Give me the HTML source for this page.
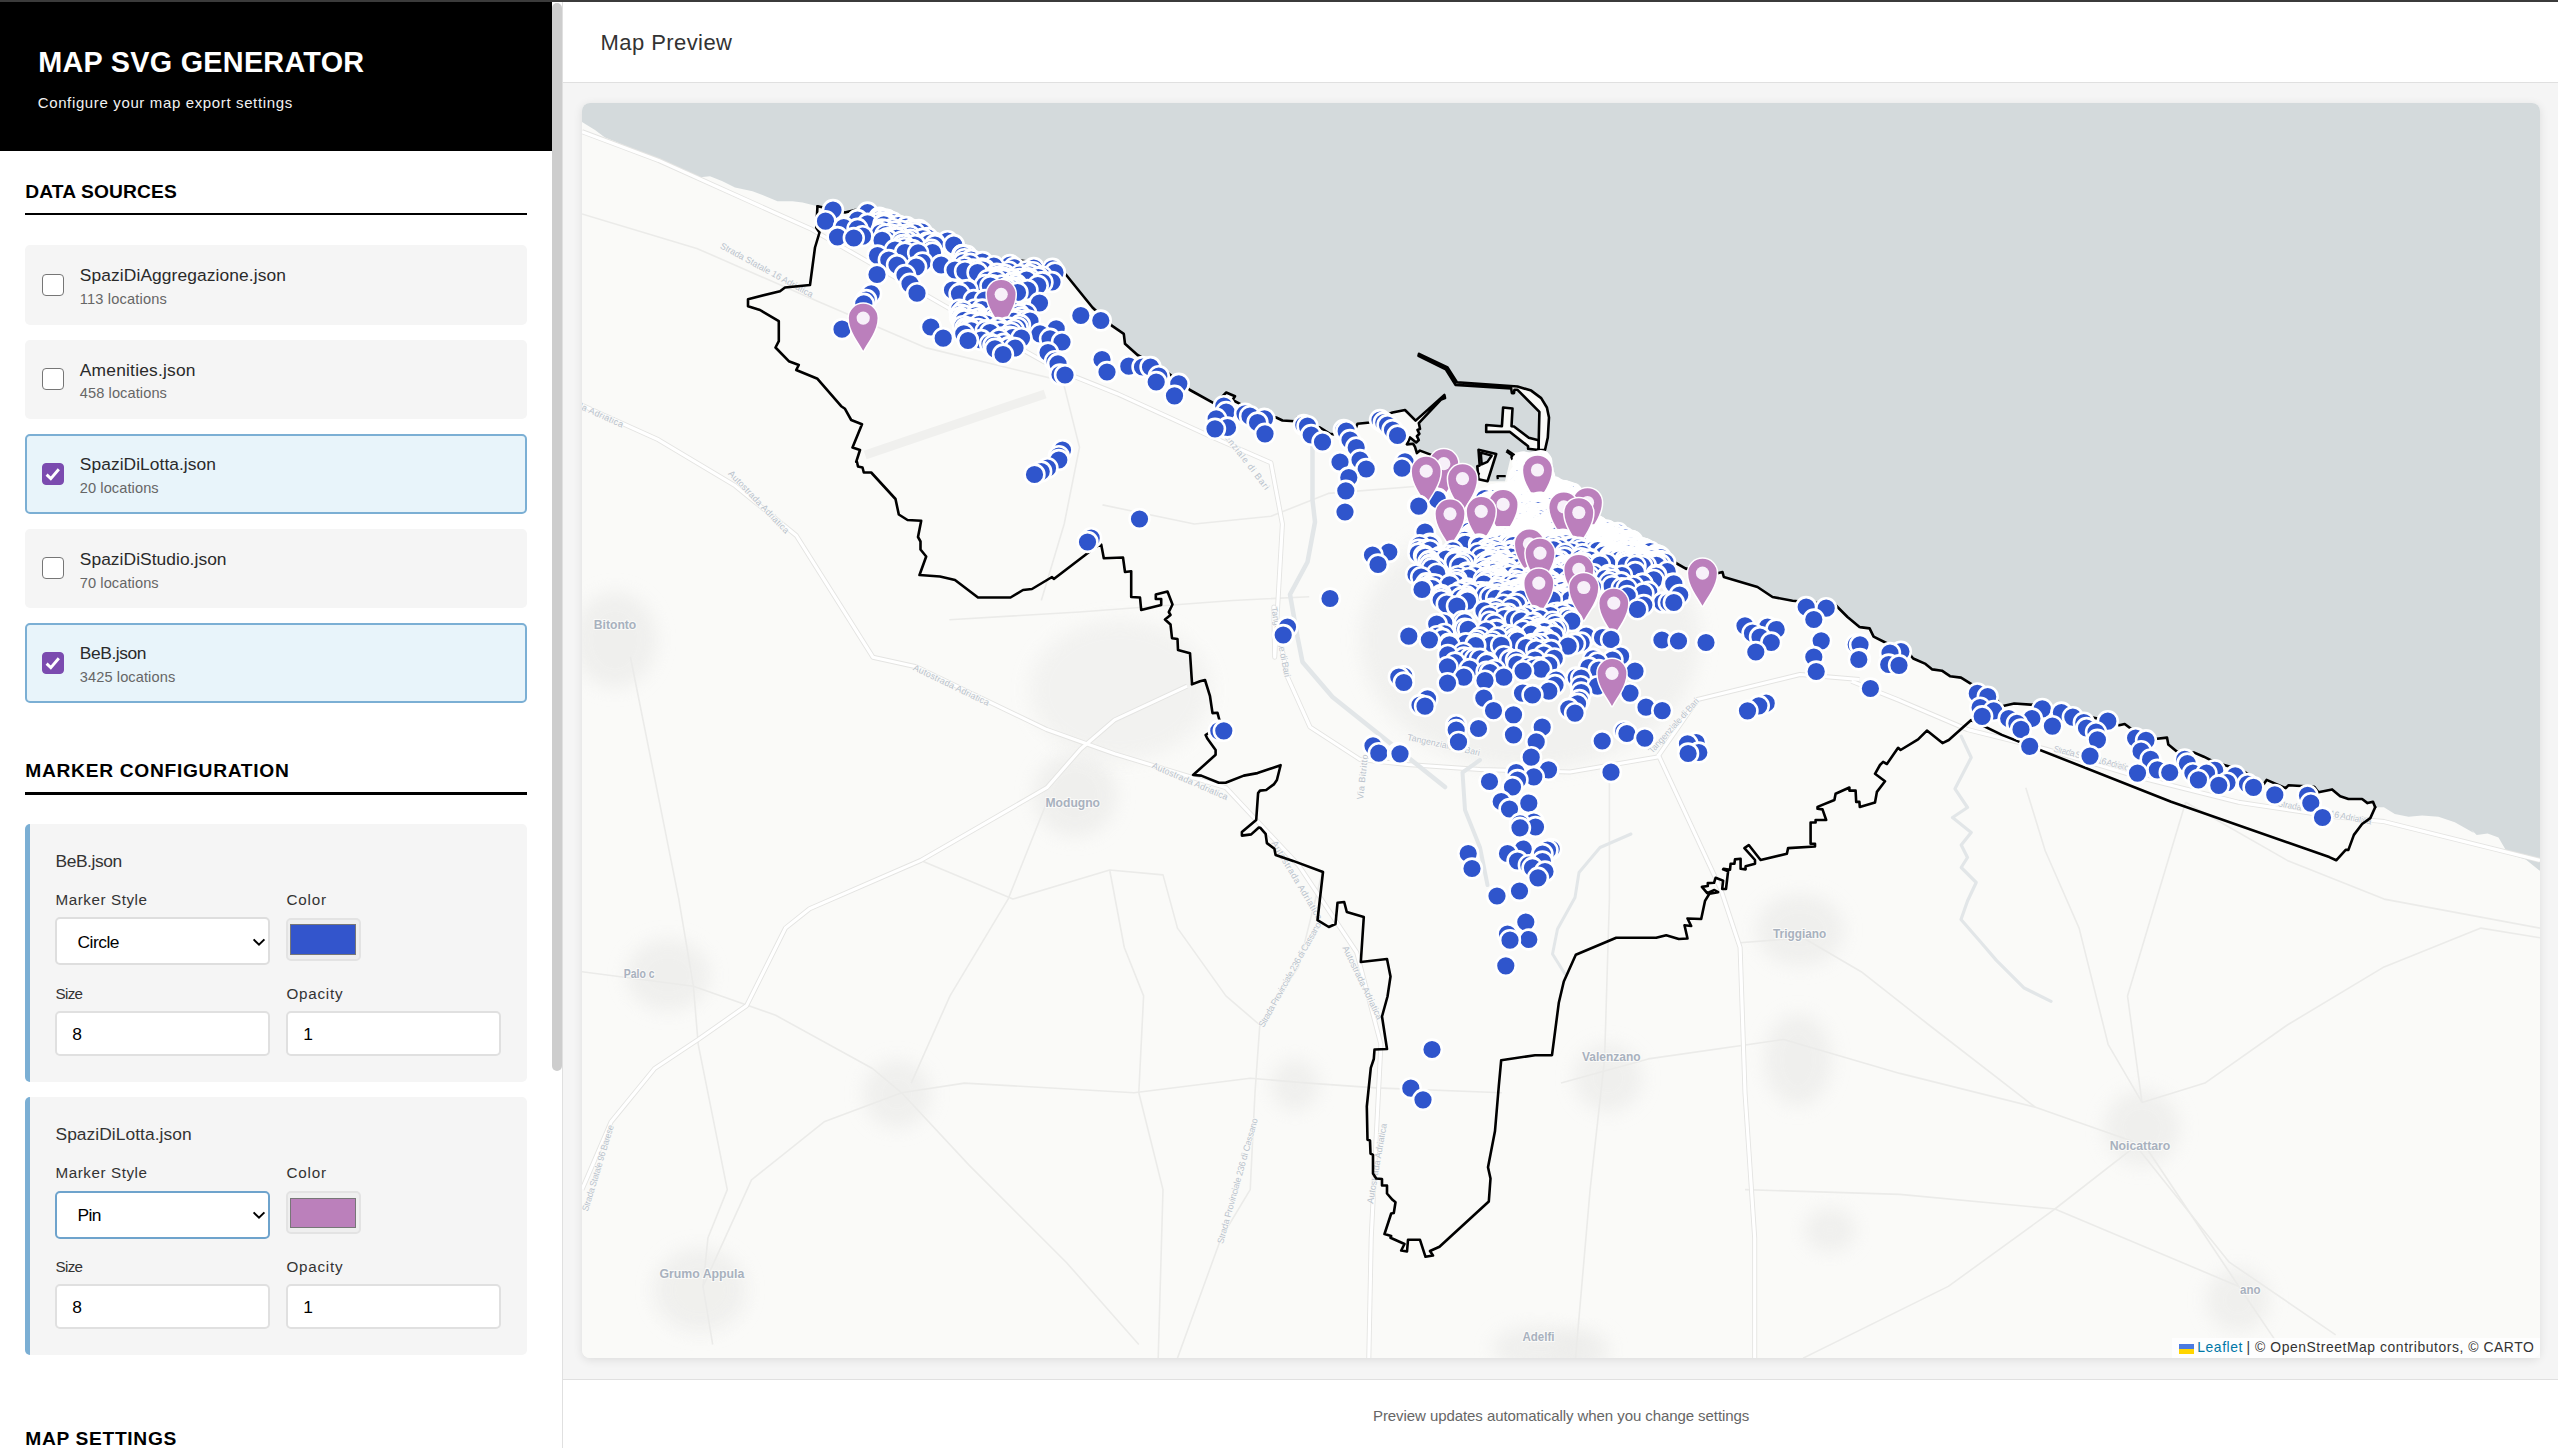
<!DOCTYPE html>
<html lang="en"><head><meta charset="utf-8"><title>Map SVG Generator</title>
<style>
*{box-sizing:border-box;margin:0;padding:0}
html,body{width:2558px;height:1448px;overflow:hidden;background:#fff;font-family:"Liberation Sans",sans-serif}
body{position:relative}
.a{position:absolute}
.t{position:absolute;white-space:nowrap;display:block}
.card{position:absolute;left:25px;width:502px;height:79.5px;background:#f5f5f5;border-radius:5px}
.card.sel{background:#e8f4fa;border:2px solid #7bafd4}
.cb{position:absolute;left:42px;width:22px;height:22px;border:1.5px solid #767676;border-radius:4px;background:#fff}
.cb.on{background:#7b4baf;border-color:#7b4baf}
.cfg{position:absolute;left:25px;width:502px;height:258px;background:#f5f5f5;border-radius:5px;border-left:5px solid #7bafd4}
.inp{position:absolute;background:#fff;border:2px solid #e0e0e0;border-radius:5px}
.col{position:absolute;background:#efefef;border:2px solid #e3e3e3;border-radius:5px}
.sw{position:absolute;border:1px solid #777}

</style></head><body>
<div class="a" style="left:0;top:0;width:2558px;height:2px;background:#3b3b3b"></div>
<div class="a" style="left:0;top:2px;width:552px;height:149px;background:#000"></div>
<span class="t" style="left:38.30px;top:47.82px;font-size:28.8px;line-height:28.8px;color:#fff;letter-spacing:0.263px;font-weight:700;">MAP SVG GENERATOR</span>
<span class="t" style="left:37.70px;top:95.20px;font-size:15px;line-height:15px;color:#f2f2f2;letter-spacing:0.637px;">Configure your map export settings</span>
<div class="a" style="left:552px;top:2px;width:10px;height:1446px;background:#fff"></div>
<div class="a" style="left:562px;top:2px;width:1px;height:1446px;background:#e0e0e0"></div>
<div class="a" style="left:552.3px;top:2.5px;width:9.5px;height:1068.5px;background:#cdcdcd;border-radius:5px"></div>
<span class="t" style="left:25.30px;top:181.55px;font-size:19.2px;line-height:19.2px;color:#000;letter-spacing:0.141px;font-weight:700;">DATA SOURCES</span>
<div class="a" style="left:25px;top:213.0px;width:502px;height:2.2px;background:#000"></div>
<div class="card" style="top:245.0px"></div>
<div class="cb" style="top:273.6px"></div>
<span class="t" style="left:79.80px;top:266.97px;font-size:17.4px;line-height:17.4px;color:#2a2a2a;letter-spacing:0.096px;">SpaziDiAggregazione.json</span>
<span class="t" style="left:79.80px;top:291.84px;font-size:14.6px;line-height:14.6px;color:#666;letter-spacing:0.183px;">113 locations</span>
<div class="card" style="top:339.6px"></div>
<div class="cb" style="top:368.2px"></div>
<span class="t" style="left:79.80px;top:361.57px;font-size:17.4px;line-height:17.4px;color:#2a2a2a;letter-spacing:0.201px;">Amenities.json</span>
<span class="t" style="left:79.80px;top:386.44px;font-size:14.6px;line-height:14.6px;color:#666;letter-spacing:0.093px;">458 locations</span>
<div class="card sel" style="top:434.2px"></div>
<div class="cb on" style="top:463.2px"><svg width="22" height="22" viewBox="0 0 22 22" style="position:absolute;left:-1.5px;top:-1.5px"><path d="M4.6 11.6 L8.8 15.6 L16.8 6.2" fill="none" stroke="#fff" stroke-width="2.9" stroke-linecap="butt" stroke-linejoin="miter"/></svg></div>
<span class="t" style="left:79.80px;top:456.17px;font-size:17.4px;line-height:17.4px;color:#2a2a2a;letter-spacing:0.049px;">SpaziDiLotta.json</span>
<span class="t" style="left:79.80px;top:481.04px;font-size:14.6px;line-height:14.6px;color:#666;letter-spacing:0.086px;">20 locations</span>
<div class="card" style="top:528.8px"></div>
<div class="cb" style="top:557.4px"></div>
<span class="t" style="left:79.80px;top:550.77px;font-size:17.4px;line-height:17.4px;color:#2a2a2a;letter-spacing:0.045px;">SpaziDiStudio.json</span>
<span class="t" style="left:79.80px;top:575.64px;font-size:14.6px;line-height:14.6px;color:#666;letter-spacing:0.086px;">70 locations</span>
<div class="card sel" style="top:623.4px"></div>
<div class="cb on" style="top:652.4px"><svg width="22" height="22" viewBox="0 0 22 22" style="position:absolute;left:-1.5px;top:-1.5px"><path d="M4.6 11.6 L8.8 15.6 L16.8 6.2" fill="none" stroke="#fff" stroke-width="2.9" stroke-linecap="butt" stroke-linejoin="miter"/></svg></div>
<span class="t" style="left:79.80px;top:645.37px;font-size:17.4px;line-height:17.4px;color:#2a2a2a;letter-spacing:-0.420px;">BeB.json</span>
<span class="t" style="left:79.80px;top:670.24px;font-size:14.6px;line-height:14.6px;color:#666;letter-spacing:0.098px;">3425 locations</span>
<span class="t" style="left:25.30px;top:760.95px;font-size:19.2px;line-height:19.2px;color:#000;letter-spacing:0.704px;font-weight:700;">MARKER CONFIGURATION</span>
<div class="a" style="left:25px;top:792.4px;width:502px;height:2.2px;background:#000"></div>
<div class="cfg" style="top:823.8px"></div>
<span class="t" style="left:55.50px;top:852.97px;font-size:17.4px;line-height:17.4px;color:#333;letter-spacing:-0.420px;">BeB.json</span>
<span class="t" style="left:55.50px;top:891.93px;font-size:15.2px;line-height:15.2px;color:#333;letter-spacing:0.569px;">Marker Style</span>
<span class="t" style="left:286.50px;top:891.93px;font-size:15.2px;line-height:15.2px;color:#333;letter-spacing:0.802px;">Color</span>
<div class="inp" style="left:55.4px;top:917.3px;width:214.8px;height:48.1px;border-color:#dedede"></div>
<span class="t" style="left:77.50px;top:933.87px;font-size:17.4px;line-height:17.4px;color:#000;letter-spacing:-0.481px;">Circle</span>
<svg class="a" style="left:251px;top:935.8px" width="16" height="12" viewBox="0 0 16 12"><path d="M2.6 3.4 L8 8.7 L13.4 3.4" fill="none" stroke="#000" stroke-width="2"/></svg>
<div class="col" style="left:286.4px;top:917.6px;width:74.2px;height:43.6px"></div>
<div class="sw" style="left:290.2px;top:924.4px;width:65.8px;height:30.4px;background:#3355cc"></div>
<span class="t" style="left:55.50px;top:986.23px;font-size:15.2px;line-height:15.2px;color:#333;letter-spacing:-0.681px;">Size</span>
<span class="t" style="left:286.50px;top:986.23px;font-size:15.2px;line-height:15.2px;color:#333;letter-spacing:0.752px;">Opacity</span>
<div class="inp" style="left:55.4px;top:1010.8px;width:214.8px;height:45.3px"></div>
<div class="inp" style="left:286.4px;top:1010.8px;width:214.8px;height:45.3px"></div>
<span class="t" style="left:72.20px;top:1026.27px;font-size:17.4px;line-height:17.4px;color:#000;">8</span>
<span class="t" style="left:303.20px;top:1026.27px;font-size:17.4px;line-height:17.4px;color:#000;">1</span>
<div class="cfg" style="top:1097.0px"></div>
<span class="t" style="left:55.50px;top:1126.17px;font-size:17.4px;line-height:17.4px;color:#333;letter-spacing:0.049px;">SpaziDiLotta.json</span>
<span class="t" style="left:55.50px;top:1165.13px;font-size:15.2px;line-height:15.2px;color:#333;letter-spacing:0.569px;">Marker Style</span>
<span class="t" style="left:286.50px;top:1165.13px;font-size:15.2px;line-height:15.2px;color:#333;letter-spacing:0.802px;">Color</span>
<div class="inp" style="left:55.4px;top:1190.5px;width:214.8px;height:48.1px;border-color:#6ea3cc"></div>
<span class="t" style="left:77.50px;top:1207.07px;font-size:17.4px;line-height:17.4px;color:#000;letter-spacing:-0.556px;">Pin</span>
<svg class="a" style="left:251px;top:1209.0px" width="16" height="12" viewBox="0 0 16 12"><path d="M2.6 3.4 L8 8.7 L13.4 3.4" fill="none" stroke="#000" stroke-width="2"/></svg>
<div class="col" style="left:286.4px;top:1190.8px;width:74.2px;height:43.6px"></div>
<div class="sw" style="left:290.2px;top:1197.6px;width:65.8px;height:30.4px;background:#bb80bb"></div>
<span class="t" style="left:55.50px;top:1259.43px;font-size:15.2px;line-height:15.2px;color:#333;letter-spacing:-0.681px;">Size</span>
<span class="t" style="left:286.50px;top:1259.43px;font-size:15.2px;line-height:15.2px;color:#333;letter-spacing:0.752px;">Opacity</span>
<div class="inp" style="left:55.4px;top:1284.0px;width:214.8px;height:45.3px"></div>
<div class="inp" style="left:286.4px;top:1284.0px;width:214.8px;height:45.3px"></div>
<span class="t" style="left:72.20px;top:1299.47px;font-size:17.4px;line-height:17.4px;color:#000;">8</span>
<span class="t" style="left:303.20px;top:1299.47px;font-size:17.4px;line-height:17.4px;color:#000;">1</span>
<span class="t" style="left:25.30px;top:1428.55px;font-size:19.2px;line-height:19.2px;color:#000;letter-spacing:0.676px;font-weight:700;">MAP SETTINGS</span>
<div class="a" style="left:563px;top:2px;width:1995px;height:80px;background:#fff"></div>
<div class="a" style="left:563px;top:82px;width:1995px;height:1px;background:#e0e0e0"></div>
<span class="t" style="left:600.50px;top:31.88px;font-size:22px;line-height:22px;color:#333;letter-spacing:0.434px;">Map Preview</span>
<div class="a" style="left:563px;top:83px;width:1995px;height:1296px;background:#f5f5f5"></div>
<div class="a" style="left:582px;top:103px;width:1958px;height:1255px;background:#fafaf8;border-radius:8px;box-shadow:0 2px 10px rgba(0,0,0,0.1);overflow:hidden" id="map"><svg width="1958" height="1255" viewBox="582 103 1958 1255" style="position:absolute;left:0;top:0">
<rect x="582" y="103" width="1958" height="1255" fill="#fafaf8"/>
<defs><filter id="bl" x="-30%" y="-30%" width="160%" height="160%"><feGaussianBlur stdDeviation="9"/></filter></defs><ellipse cx="615" cy="640" rx="42" ry="48" fill="#ececea" opacity="0.75" filter="url(#bl)"/><ellipse cx="1075" cy="795" rx="42" ry="42" fill="#ececea" opacity="0.75" filter="url(#bl)"/><ellipse cx="668" cy="975" rx="42" ry="36" fill="#ececea" opacity="0.75" filter="url(#bl)"/><ellipse cx="700" cy="1290" rx="46" ry="42" fill="#ececea" opacity="0.75" filter="url(#bl)"/><ellipse cx="897" cy="1094" rx="34" ry="34" fill="#ececea" opacity="0.75" filter="url(#bl)"/><ellipse cx="1540" cy="1348" rx="48" ry="22" fill="#ececea" opacity="0.75" filter="url(#bl)"/><ellipse cx="1608" cy="1078" rx="34" ry="34" fill="#ececea" opacity="0.75" filter="url(#bl)"/><ellipse cx="1800" cy="930" rx="44" ry="36" fill="#ececea" opacity="0.75" filter="url(#bl)"/><ellipse cx="1798" cy="1060" rx="34" ry="46" fill="#ececea" opacity="0.75" filter="url(#bl)"/><ellipse cx="2142" cy="1128" rx="38" ry="38" fill="#ececea" opacity="0.75" filter="url(#bl)"/><ellipse cx="2238" cy="1300" rx="32" ry="32" fill="#ececea" opacity="0.75" filter="url(#bl)"/><ellipse cx="1830" cy="1230" rx="26" ry="22" fill="#ececea" opacity="0.75" filter="url(#bl)"/><ellipse cx="1295" cy="1085" rx="24" ry="26" fill="#ececea" opacity="0.75" filter="url(#bl)"/><ellipse cx="1580" cy="1350" rx="30" ry="20" fill="#ececea" opacity="0.75" filter="url(#bl)"/><ellipse cx="1530" cy="640" rx="170" ry="130" fill="#efefed" opacity="0.8" filter="url(#bl)"/><ellipse cx="1120" cy="690" rx="90" ry="70" fill="#efefed" opacity="0.7" filter="url(#bl)"/>
<polygon points="582.0,103.0 2540.0,103.0 2540.0,870.4 2539.4,870.4 2525.8,859.5 2508.1,854.0 2498.5,837.6 2487.6,833.6 2476.7,834.9 2471.2,829.5 2473.9,833.1 2454.8,822.2 2438.5,816.7 2422.1,815.4 2408.5,816.7 2394.8,814.0 2383.9,807.2 2375.2,807.2 2373.0,801.7 2367.5,803.1 2362.1,799.0 2348.4,799.0 2340.2,796.3 2332.1,789.4 2318.4,792.2 2314.3,786.7 2288.4,785.3 2285.7,788.1 2266.6,779.9 2263.8,784.0 2242.0,770.3 2214.7,762.2 2203.8,756.7 2194.3,752.6 2176.5,751.2 2168.3,744.4 2167.0,737.6 2154.7,739.0 2135.6,732.1 2124.7,724.0 2119.2,725.3 2097.4,718.5 2078.3,714.4 2051.0,707.6 2034.6,704.9 2014.2,703.5 2001.9,706.2 1996.4,699.4 1971.9,684.4 1961.0,677.6 1950.0,676.2 1941.9,670.7 1932.3,669.4 1925.5,663.9 1913.2,658.5 1906.4,650.3 1887.3,643.5 1873.6,636.6 1869.6,628.4 1860.0,627.1 1859.5,627.0 1847.5,617.0 1835.0,604.5 1792.5,600.8 1772.5,597.0 1757.5,587.0 1723.8,577.0 1722.5,572.0 1717.5,573.2 1685.0,568.2 1686.2,568.8 1675.0,562.5 1662.5,560.0 1662.5,560.0 1650.0,552.5 1631.2,546.2 1612.5,535.0 1600.0,526.2 1575.0,490.0 1555.0,487.5 1547.5,451.9 1512.5,452.5 1511.2,455.0 1505.0,481.2 1488.8,481.2 1478.8,473.8 1467.5,471.2 1450.0,462.5 1430.0,454.4 1420.0,450.6 1416.9,453.1 1415.0,446.9 1413.1,443.8 1406.9,444.4 1410.0,437.5 1416.2,442.5 1418.8,440.0 1416.9,436.2 1419.4,433.8 1417.5,430.0 1420.0,428.8 1418.8,423.1 1441.2,399.4 1445.0,398.1 1444.4,395.0 1415.6,420.6 1405.0,410.0 1392.5,412.5 1372.5,420.0 1370.0,422.5 1357.5,423.8 1355.0,430.0 1337.5,435.0 1330.0,433.8 1320.0,427.5 1298.8,422.5 1297.5,417.5 1295.0,421.2 1282.5,420.5 1276.2,417.5 1257.5,413.8 1241.2,410.0 1240.0,403.8 1232.5,400.0 1235.0,396.2 1226.2,392.5 1220.0,398.8 1215.0,403.8 1190.0,390.0 1162.5,368.8 1137.5,355.0 1125.0,343.8 1123.8,333.8 1112.5,326.2 1092.5,307.5 1066.2,275.0 1055.0,265.0 1033.8,262.5 1010.0,258.8 985.0,260.0 962.5,247.5 947.5,236.2 930.0,232.5 918.8,228.0 905.0,224.5 890.0,217.5 875.0,213.0 855.0,210.0 845.0,212.5 826.2,208.0 817.5,206.2 817.5,206.2 802.5,202.5 792.5,201.2 777.5,201.2 762.5,195.0 752.5,191.2 735.0,187.5 722.5,181.2 710.0,176.2 697.5,177.5 690.0,172.5 678.8,167.5 665.0,162.5 655.0,160.0 638.8,153.8 635.0,150.0 617.5,142.5 605.0,137.5 595.0,130.0 582.0,122.0 582.0,122.0" fill="#d4dadc"/>
<polyline points="865.2,455.1 1045.1,393.9" fill="none" stroke="#f0f0ee" stroke-width="9"/><polyline points="630.4,657.0 659.5,802.3 678.8,899.1 693.4,986.2 698.2,1044.3 717.6,1141.2 727.3,1189.6 707.9,1238.0 703.0,1286.4" fill="none" stroke="#ebebe9" stroke-width="1.6" stroke-linejoin="round"/><polyline points="582.0,971.7 693.4,986.2 775.7,1015.3 872.5,1068.5 901.6,1092.8" fill="none" stroke="#ebebe9" stroke-width="1.6" stroke-linejoin="round"/><polyline points="901.6,1092.8 964.5,1083.1 1134.0,1092.8 1250.2,1078.2 1308.3,1083.1 1376.0,1087.9 1501.9,1092.8" fill="none" stroke="#ebebe9" stroke-width="1.6" stroke-linejoin="round"/><polyline points="1322.8,870.0 1298.6,966.9 1259.8,1025.0 1255.0,1092.8 1250.2,1189.6 1221.1,1238.0 1177.5,1358.1" fill="none" stroke="#ebebe9" stroke-width="1.6" stroke-linejoin="round"/><polyline points="1046.8,802.3 1008.1,899.1 950.0,995.9 911.2,1083.1" fill="none" stroke="#ebebe9" stroke-width="1.6" stroke-linejoin="round"/><polyline points="920.9,860.4 1012.9,899.1 1109.7,870.0 1163.0,874.9 1177.5,928.1 1225.9,995.9 1259.8,1025.0" fill="none" stroke="#ebebe9" stroke-width="1.6" stroke-linejoin="round"/><polyline points="901.6,1092.8 969.3,1165.4 1066.2,1262.2 1138.8,1344.5" fill="none" stroke="#ebebe9" stroke-width="1.6" stroke-linejoin="round"/><polyline points="901.6,1092.8 824.1,1121.8 751.5,1179.9 703.0,1286.4 712.7,1344.5" fill="none" stroke="#ebebe9" stroke-width="1.6" stroke-linejoin="round"/><polyline points="1109.7,870.0 1124.3,947.5 1143.6,995.9 1138.8,1092.8 1163.0,1189.6 1158.2,1358.1" fill="none" stroke="#ebebe9" stroke-width="1.6" stroke-linejoin="round"/><polyline points="1609.4,778.0 1609.4,899.1 1604.6,1058.9 1590.1,1189.6 1575.5,1358.1" fill="none" stroke="#ebebe9" stroke-width="1.6" stroke-linejoin="round"/><polyline points="1740.1,942.7 1803.1,937.8 1861.2,971.7 1929.0,1025.0 2035.5,1107.3 2132.3,1141.2 2229.2,1262.2 2335.7,1334.8" fill="none" stroke="#ebebe9" stroke-width="1.6" stroke-linejoin="round"/><polyline points="2142.0,1102.4 2204.9,1083.1 2287.3,1025.0 2384.1,966.9 2480.9,928.1 2540.0,937.8" fill="none" stroke="#ebebe9" stroke-width="1.6" stroke-linejoin="round"/><polyline points="2142.0,1102.4 2108.1,1044.3 2079.1,928.1 2045.2,850.7 2025.8,787.7" fill="none" stroke="#ebebe9" stroke-width="1.6" stroke-linejoin="round"/><polyline points="2142.0,1102.4 2127.5,995.9 2156.5,899.1 2185.6,802.3" fill="none" stroke="#ebebe9" stroke-width="1.6" stroke-linejoin="round"/><polyline points="1561.0,1083.1 1648.2,1058.9 1783.7,1039.5 1899.9,1073.4 2035.5,1107.3" fill="none" stroke="#ebebe9" stroke-width="1.6" stroke-linejoin="round"/><polyline points="2142.0,1141.2 2054.9,1209.0 1948.3,1286.4 1803.1,1358.1" fill="none" stroke="#ebebe9" stroke-width="1.6" stroke-linejoin="round"/><polyline points="2142.0,1141.2 2238.8,1286.4 2287.3,1358.1" fill="none" stroke="#ebebe9" stroke-width="1.6" stroke-linejoin="round"/><polyline points="1745.0,1189.6 1899.9,1194.4 2054.9,1209.0 2238.8,1286.4" fill="none" stroke="#ebebe9" stroke-width="1.6" stroke-linejoin="round"/><polyline points="2185.6,802.3 2287.3,860.4 2384.1,899.1 2540.0,928.1" fill="none" stroke="#ebebe9" stroke-width="1.6" stroke-linejoin="round"/><polyline points="582.0,214.0 696.8,248.4 819.3,302.0 926.4,347.9 1068.0,382.4" fill="none" stroke="#ebebe9" stroke-width="1.6" stroke-linejoin="round"/><polyline points="1060.4,370.9 1079.5,447.4 1064.2,524.0 1041.3,600.5" fill="none" stroke="#ebebe9" stroke-width="1.6" stroke-linejoin="round"/><polyline points="1102.5,504.9 1194.3,524.0 1270.9,516.3 1328.3,493.4 1424.0,485.7" fill="none" stroke="#ebebe9" stroke-width="1.6" stroke-linejoin="round"/><polyline points="949.4,619.7 1079.5,612.0 1232.6,600.5 1309.2,596.7" fill="none" stroke="#ebebe9" stroke-width="1.6" stroke-linejoin="round"/><polyline points="916.1,666.7 1046.8,729.6 1114.6,753.8 1225.9,787.7 1298.6,865.2 1356.7,952.3 1380.9,1044.3 1376.0,1141.2 1371.2,1238.0 1368.8,1358.1" fill="none" stroke="#e4e4e2" stroke-width="5" stroke-linejoin="round"/><polyline points="582.0,405.3 658.5,439.8 735.1,485.7 796.3,535.5 872.9,657.2 916.1,666.7" fill="none" stroke="#e4e4e2" stroke-width="5" stroke-linejoin="round"/><polyline points="582.0,1189.6 611.1,1121.8 654.6,1068.5 698.2,1039.5 746.6,1005.6 785.4,928.1 809.6,908.8 920.9,860.4 1046.8,787.7 1080.7,749.0 1114.6,719.9 1187.2,686.1" fill="none" stroke="#e4e4e2" stroke-width="5" stroke-linejoin="round"/><polyline points="582.0,131.7 658.5,160.4 811.6,229.3 964.7,317.3 1060.4,370.9 1117.8,393.9 1209.7,436.0 1270.9,462.8 1282.4,524.0 1274.7,657.2 1273.8,607.0 1287.5,677.0 1310.0,727.0 1360.0,759.5 1407.5,764.5 1480.0,769.5 1570.0,772.0 1657.5,757.0 1697.5,699.5 1800.0,674.5 1859.5,679.5" fill="none" stroke="#e4e4e2" stroke-width="5" stroke-linejoin="round"/><polyline points="1851.5,681.2 1899.9,700.6 1967.7,729.6 2045.2,749.0 2142.0,778.0 2238.8,802.3 2335.7,816.8 2384.1,821.6 2540.0,860.4" fill="none" stroke="#e4e4e2" stroke-width="5" stroke-linejoin="round"/><polyline points="1657.8,753.8 1720.8,889.4 1740.1,947.5 1745.0,1092.8 1754.7,1238.0 1754.7,1358.1" fill="none" stroke="#e4e4e2" stroke-width="5" stroke-linejoin="round"/><polyline points="916.1,666.7 1046.8,729.6 1114.6,753.8 1225.9,787.7 1298.6,865.2 1356.7,952.3 1380.9,1044.3 1376.0,1141.2 1371.2,1238.0 1368.8,1358.1" fill="none" stroke="#fff" stroke-width="3.2" stroke-linejoin="round"/><polyline points="582.0,405.3 658.5,439.8 735.1,485.7 796.3,535.5 872.9,657.2 916.1,666.7" fill="none" stroke="#fff" stroke-width="3.2" stroke-linejoin="round"/><polyline points="582.0,1189.6 611.1,1121.8 654.6,1068.5 698.2,1039.5 746.6,1005.6 785.4,928.1 809.6,908.8 920.9,860.4 1046.8,787.7 1080.7,749.0 1114.6,719.9 1187.2,686.1" fill="none" stroke="#fff" stroke-width="3.2" stroke-linejoin="round"/><polyline points="582.0,131.7 658.5,160.4 811.6,229.3 964.7,317.3 1060.4,370.9 1117.8,393.9 1209.7,436.0 1270.9,462.8 1282.4,524.0 1274.7,657.2 1273.8,607.0 1287.5,677.0 1310.0,727.0 1360.0,759.5 1407.5,764.5 1480.0,769.5 1570.0,772.0 1657.5,757.0 1697.5,699.5 1800.0,674.5 1859.5,679.5" fill="none" stroke="#fff" stroke-width="3.2" stroke-linejoin="round"/><polyline points="1851.5,681.2 1899.9,700.6 1967.7,729.6 2045.2,749.0 2142.0,778.0 2238.8,802.3 2335.7,816.8 2384.1,821.6 2540.0,860.4" fill="none" stroke="#fff" stroke-width="3.2" stroke-linejoin="round"/><polyline points="1657.8,753.8 1720.8,889.4 1740.1,947.5 1745.0,1092.8 1754.7,1238.0 1754.7,1358.1" fill="none" stroke="#fff" stroke-width="3.2" stroke-linejoin="round"/>
<polyline points="1312.5,440.0 1312.5,500.0 1315.0,522.0 1307.5,562.0 1290.0,594.5 1297.5,637.0 1302.5,662.0 1332.5,697.0 1382.5,737.0 1445.0,787.0" fill="none" stroke="#e2e6e8" stroke-width="4.5" stroke-linejoin="round" stroke-linecap="round"/><polyline points="1480.0,760.0 1462.5,772.5 1465.0,810.0 1480.0,847.5 1487.5,885.0" fill="none" stroke="#e2e6e8" stroke-width="4" stroke-linejoin="round" stroke-linecap="round"/><polyline points="1631.0,834.0 1600.0,847.5 1579.0,872.5 1575.0,897.5 1557.5,929.0 1552.5,954.0 1565.0,974.0" fill="none" stroke="#e2e6e8" stroke-width="3" stroke-linejoin="round" stroke-linecap="round"/><polyline points="1961.2,736.2 1971.2,757.5 1955.0,788.8 1967.5,807.5 1952.5,817.5 1971.2,832.5 1961.2,845.0 1967.5,857.5 1961.2,867.5 1976.2,882.5 1967.5,901.0 1961.0,919.5 1980.0,941.3 1996.4,960.4 2023.7,987.7 2051.0,1001.4" fill="none" stroke="#e2e6e8" stroke-width="3.2" stroke-linejoin="round" stroke-linecap="round"/>
<text transform="translate(721.0,245.0) rotate(28.7)" x="0" y="3" font-family="Liberation Sans, sans-serif" font-size="9" fill="#b9c2cc" stroke="#fafaf8" stroke-width="1.5" paint-order="stroke" textLength="104.3" lengthAdjust="spacing">Strada Statale 16 Adriatica</text><text transform="translate(730.0,472.0) rotate(46.2)" x="0" y="3" font-family="Liberation Sans, sans-serif" font-size="9" fill="#b9c2cc" stroke="#fafaf8" stroke-width="1.5" paint-order="stroke" textLength="83.1" lengthAdjust="spacing">Autostrada Adriatica</text><text transform="translate(913.8,667.0) rotate(25.8)" x="0" y="3" font-family="Liberation Sans, sans-serif" font-size="9" fill="#b9c2cc" stroke="#fafaf8" stroke-width="1.5" paint-order="stroke" textLength="83.3" lengthAdjust="spacing">Autostrada Adriatica</text><text transform="translate(1152.5,765.0) rotate(23.4)" x="0" y="3" font-family="Liberation Sans, sans-serif" font-size="9" fill="#b9c2cc" stroke="#fafaf8" stroke-width="1.5" paint-order="stroke" textLength="81.7" lengthAdjust="spacing">Autostrada Adriatica</text><text transform="translate(1273.8,841.5) rotate(59.2)" x="0" y="3" font-family="Liberation Sans, sans-serif" font-size="9" fill="#b9c2cc" stroke="#fafaf8" stroke-width="1.5" paint-order="stroke" textLength="90.3" lengthAdjust="spacing">Autostrada Adriatica</text><text transform="translate(1345.0,946.5) rotate(64.2)" x="0" y="3" font-family="Liberation Sans, sans-serif" font-size="9" fill="#b9c2cc" stroke="#fafaf8" stroke-width="1.5" paint-order="stroke" textLength="80.5" lengthAdjust="spacing">Autostrada Adriatica</text><text transform="translate(1370.0,1203.5) rotate(-80.2)" x="0" y="3" font-family="Liberation Sans, sans-serif" font-size="9" fill="#b9c2cc" stroke="#fafaf8" stroke-width="1.5" paint-order="stroke" textLength="81.2" lengthAdjust="spacing">Autostrada Adriatica</text><text transform="translate(1273.8,607.0) rotate(78.9)" x="0" y="3" font-family="Liberation Sans, sans-serif" font-size="9" fill="#b9c2cc" stroke="#fafaf8" stroke-width="1.5" paint-order="stroke" textLength="71.3" lengthAdjust="spacing">Tangenziale di Bari</text><text transform="translate(1407.5,737.0) rotate(12.4)" x="0" y="3" font-family="Liberation Sans, sans-serif" font-size="9" fill="#b9c2cc" stroke="#fafaf8" stroke-width="1.5" paint-order="stroke" textLength="74.2" lengthAdjust="spacing">Tangenziale di Bari</text><text transform="translate(1650.0,752.0) rotate(-47.9)" x="0" y="3" font-family="Liberation Sans, sans-serif" font-size="9" fill="#b9c2cc" stroke="#fafaf8" stroke-width="1.5" paint-order="stroke" textLength="70.8" lengthAdjust="spacing">Tangenziale di Bari</text><text transform="translate(1213.0,418.0) rotate(52.3)" x="0" y="3" font-family="Liberation Sans, sans-serif" font-size="9" fill="#b9c2cc" stroke="#fafaf8" stroke-width="1.5" paint-order="stroke" textLength="89.3" lengthAdjust="spacing">Tangenziale di Bari</text><text transform="translate(1261.0,1026.5) rotate(-60.9)" x="0" y="3" font-family="Liberation Sans, sans-serif" font-size="9" fill="#b9c2cc" stroke="#fafaf8" stroke-width="1.5" paint-order="stroke" textLength="118.7" lengthAdjust="spacing">Strada Provinciale 236 di Cassano</text><text transform="translate(1220.0,1243.5) rotate(-74.4)" x="0" y="3" font-family="Liberation Sans, sans-serif" font-size="9" fill="#b9c2cc" stroke="#fafaf8" stroke-width="1.5" paint-order="stroke" textLength="129.8" lengthAdjust="spacing">Strada Provinciale 236 di Cassano</text><text transform="translate(585.0,1211.0) rotate(-73.2)" x="0" y="3" font-family="Liberation Sans, sans-serif" font-size="9" fill="#b9c2cc" stroke="#fafaf8" stroke-width="1.5" paint-order="stroke" textLength="89.8" lengthAdjust="spacing">Strada Statale 96 Barese</text><text transform="translate(1360.0,799.5) rotate(-83.7)" x="0" y="3" font-family="Liberation Sans, sans-serif" font-size="9" fill="#b9c2cc" stroke="#fafaf8" stroke-width="1.5" paint-order="stroke" textLength="45.3" lengthAdjust="spacing">Via Bitritto</text><text transform="translate(2053.7,748.5) rotate(14.5)" x="0" y="3" font-family="Liberation Sans, sans-serif" font-size="9" fill="#b9c2cc" stroke="#fafaf8" stroke-width="1.5" paint-order="stroke" textLength="81.8" lengthAdjust="spacing">Strada Statale 16 Adriatica</text><text transform="translate(2277.5,803.0) rotate(11.2)" x="0" y="3" font-family="Liberation Sans, sans-serif" font-size="9" fill="#b9c2cc" stroke="#fafaf8" stroke-width="1.5" paint-order="stroke" textLength="95.9" lengthAdjust="spacing">Strada Statale 16 Adriatica</text><text transform="translate(545.0,390.0) rotate(24.2)" x="0" y="3" font-family="Liberation Sans, sans-serif" font-size="9" fill="#b9c2cc" stroke="#fafaf8" stroke-width="1.5" paint-order="stroke" textLength="85.5" lengthAdjust="spacing">Autostrada Adriatica</text>
<polygon points="1419.0,353.8 1447.5,367.5 1456.9,382.2 1517.5,386.5 1531.2,390.6 1541.2,398.1 1546.9,407.5 1549.0,417.5 1547.8,437.5 1545.0,450.0 1538.5,450.0 1539.4,411.9 1517.5,389.8 1514.4,389.8 1514.0,393.1 1511.9,393.1 1511.2,388.5 1455.5,384.9 1445.8,369.4 1418.5,355.9" fill="#fafaf8" stroke="#000" stroke-width="2.6" stroke-linejoin="round"/>
<polygon points="1503.1,407.5 1512.5,408.5 1511.5,426.2 1514.0,426.5 1528.8,437.8 1538.5,440.2 1538.5,450.0 1528.1,448.8 1528.1,446.2 1510.0,431.9 1486.2,431.9 1486.2,425.0 1501.9,426.2" fill="#fafaf8" stroke="#000" stroke-width="2.6" stroke-linejoin="round"/>
<polygon points="1478.5,449.7 1496.2,454.0 1487.6,481.2 1478.5,479.2 1477.3,466.2 1479.7,465.4" fill="#fafaf8" stroke="#000" stroke-width="2.6" stroke-linejoin="round"/>
<polygon points="1480.8,452.6 1491.7,455.7 1487.4,461.9 1481.7,464.4" fill="#d4dadc" stroke="#000" stroke-width="2.4" stroke-linejoin="round"/>
<polyline points="1506.9,449.9 1514.7,455.2" fill="none" stroke="#000" stroke-width="2.2" stroke-linejoin="round"/>
<polyline points="1506.2,451.3 1512.5,455.8 1511.3,457.0 1512.4,459.9" fill="none" stroke="#000" stroke-width="2.2" stroke-linejoin="round"/>
<polyline points="1497.8,479.2 1497.4,476.1 1505.7,476.1" fill="none" stroke="#000" stroke-width="2.2" stroke-linejoin="round"/>
<polyline points="817.5,206.2 816.2,227.5 819.5,232.5 815.0,247.5 810.0,285.0 785.0,287.5 780.0,291.2 748.0,299.2 748.0,306.2 760.0,310.0 778.8,321.2 778.8,341.2 775.5,347.5 788.8,361.2 798.8,365.0 796.2,370.0 817.5,378.8 841.2,406.2 845.0,408.8 851.2,420.0 862.0,424.2 852.5,447.5 860.0,450.0 856.2,461.8 857.0,462.0 858.0,466.5 862.5,467.5 863.8,472.5 871.2,472.5 895.5,499.0 898.8,514.5 907.5,520.0 921.2,520.8 918.0,537.0 920.5,541.5 920.5,549.5 926.2,556.5 919.5,575.0 940.0,576.5 955.0,580.0 978.0,597.5 1010.5,597.5 1023.0,590.0 1032.0,589.0 1052.0,577.0 1053.8,579.0 1087.5,553.2 1095.0,547.0 1101.2,544.5 1103.8,558.2 1123.0,557.5 1125.0,572.0 1131.2,571.2 1131.2,597.0 1140.0,597.5 1141.2,610.0 1161.2,605.0 1161.2,599.0 1155.8,599.0 1155.8,594.5 1167.5,591.5 1172.5,604.5 1168.8,612.0 1170.5,615.0 1165.0,619.5 1170.5,624.5 1172.0,638.2 1177.5,639.0 1178.0,650.0 1190.0,653.2 1192.0,683.2 1191.9,684.4 1200.0,681.2 1205.0,680.0 1210.0,696.2 1212.5,713.1 1217.5,712.8 1219.4,720.0 1220.0,723.8 1209.4,732.5 1205.6,735.0 1207.5,738.8 1215.6,750.0 1215.6,754.8 1193.1,775.0 1201.2,775.6 1218.8,782.8 1225.6,782.8 1243.8,775.6 1257.5,773.1 1280.6,765.2 1276.9,780.0 1273.8,784.4 1266.2,790.0 1260.0,790.6 1258.1,793.1 1256.2,820.0 1241.9,831.9 1241.9,835.6 1251.2,834.4 1258.8,827.5 1260.6,828.1 1265.6,833.8 1266.9,843.1 1274.4,848.8 1275.6,855.0 1293.1,860.9 1323.0,872.0 1317.5,920.2 1328.8,927.0 1335.5,924.0 1337.5,902.8 1344.2,902.0 1346.8,912.0 1363.8,917.0 1360.8,962.0 1387.0,959.0 1390.5,976.5 1387.5,996.5 1382.0,1016.5 1387.0,1049.0 1374.5,1049.5 1373.8,1059.0 1370.8,1067.8 1366.8,1106.5 1366.8,1106.0 1367.5,1139.8 1370.0,1140.5 1370.5,1153.5 1373.0,1154.8 1373.0,1173.5 1376.2,1178.5 1382.0,1179.0 1382.0,1185.5 1387.0,1185.5 1387.0,1193.5 1392.5,1199.8 1395.5,1202.2 1393.8,1213.0 1391.2,1213.5 1384.5,1234.0 1391.2,1236.0 1390.5,1237.8 1404.5,1244.0 1401.2,1250.5 1407.0,1251.5 1408.0,1239.8 1420.0,1239.8 1425.5,1256.8 1433.0,1255.5 1430.0,1251.0 1439.5,1246.8 1488.8,1201.5 1490.5,1178.5 1488.0,1167.2 1495.0,1131.0 1498.8,1086.0 1501.2,1060.2 1535.0,1055.2 1552.0,1055.2 1558.8,1002.8 1563.8,981.5 1575.8,954.8 1616.2,937.8 1656.2,937.8 1666.2,935.2 1678.8,939.0 1687.5,938.5 1684.5,925.2 1691.2,926.0 1687.5,918.5 1701.2,919.0 1705.0,900.9 1709.4,893.8 1718.1,892.2 1714.4,890.0 1707.2,893.1 1701.9,886.9 1707.8,886.0 1707.8,883.1 1714.0,882.8 1715.6,877.8 1723.1,880.6 1722.2,889.0 1726.0,889.0 1728.1,871.2 1723.1,869.4 1723.5,868.8 1730.0,869.8 1730.6,863.8 1734.4,863.8 1735.0,859.4 1740.6,858.8 1740.6,868.8 1745.6,869.4 1745.6,866.2 1755.0,863.8 1755.0,860.0 1744.4,848.1 1748.8,845.0 1760.6,860.0 1786.9,853.8 1788.1,848.1 1815.0,846.5 1815.0,843.8 1810.6,843.8 1810.6,822.5 1815.6,822.5 1815.6,820.0 1826.2,820.0 1822.5,809.4 1817.5,808.8 1817.5,806.9 1834.4,800.0 1835.6,793.8 1849.4,787.5 1849.4,790.6 1855.6,790.6 1856.2,801.9 1859.4,801.9 1859.8,806.9 1875.0,802.5 1876.9,791.9 1885.0,781.2 1875.0,773.8 1880.0,765.0 1883.1,761.9 1886.9,764.0 1898.1,747.8 1900.6,750.0 1918.1,739.4 1926.9,730.6 1942.5,743.1 1948.8,740.0 1971.2,720.0 2001.9,734.9 2171.1,801.7 2329.3,857.1 2336.2,860.3 2345.7,849.9 2348.4,849.9 2353.9,834.9 2362.1,824.0 2370.3,818.1 2375.2,807.2" fill="none" stroke="#000" stroke-width="2.6" stroke-linejoin="round" stroke-linecap="round"/>
<polyline points="817.5,206.2 826.2,208.0 845.0,212.5 855.0,210.0 875.0,213.0 890.0,217.5 905.0,224.5 918.8,228.0 930.0,232.5 947.5,236.2 962.5,247.5 985.0,260.0 1010.0,258.8 1033.8,262.5 1055.0,265.0 1066.2,275.0 1092.5,307.5 1112.5,326.2 1123.8,333.8 1125.0,343.8 1137.5,355.0 1162.5,368.8 1190.0,390.0 1215.0,403.8 1220.0,398.8 1226.2,392.5 1235.0,396.2 1232.5,400.0 1240.0,403.8 1241.2,410.0 1257.5,413.8 1276.2,417.5 1282.5,420.5 1295.0,421.2 1297.5,417.5 1298.8,422.5 1320.0,427.5 1330.0,433.8 1337.5,435.0 1355.0,430.0 1357.5,423.8 1370.0,422.5 1372.5,420.0 1392.5,412.5 1405.0,410.0 1415.6,420.6 1444.4,395.0 1445.0,398.1 1441.2,399.4 1418.8,423.1 1420.0,428.8 1417.5,430.0 1419.4,433.8 1416.9,436.2 1418.8,440.0 1416.2,442.5 1410.0,437.5 1406.9,444.4 1413.1,443.8 1415.0,446.9 1416.9,453.1 1420.0,450.6 1430.0,454.4 1450.0,462.5 1467.5,471.2 1478.8,473.8" fill="none" stroke="#000" stroke-width="2.6" stroke-linejoin="round" stroke-linecap="round"/>
<polyline points="1662.5,560.0 1675.0,562.5 1686.2,568.8 1685.0,568.2 1717.5,573.2 1722.5,572.0 1723.8,577.0 1757.5,587.0 1772.5,597.0 1792.5,600.8 1835.0,604.5 1847.5,617.0 1859.5,627.0 1860.0,627.1 1869.6,628.4 1873.6,636.6 1887.3,643.5 1906.4,650.3 1913.2,658.5 1925.5,663.9 1932.3,669.4 1941.9,670.7 1950.0,676.2 1961.0,677.6 1971.9,684.4 1996.4,699.4 2001.9,706.2 2014.2,703.5 2034.6,704.9 2051.0,707.6 2078.3,714.4 2097.4,718.5 2119.2,725.3 2124.7,724.0 2135.6,732.1 2154.7,739.0 2167.0,737.6 2168.3,744.4 2176.5,751.2 2194.3,752.6 2203.8,756.7 2214.7,762.2 2242.0,770.3 2263.8,784.0 2266.6,779.9 2285.7,788.1 2288.4,785.3 2314.3,786.7 2318.4,792.2 2332.1,789.4 2340.2,796.3 2348.4,799.0 2362.1,799.0 2367.5,803.1 2373.0,801.7 2375.2,807.2" fill="none" stroke="#000" stroke-width="2.6" stroke-linejoin="round" stroke-linecap="round"/>
<polyline points="1555.0,487.5 1575.0,490.0" fill="none" stroke="#000" stroke-width="2.6" stroke-linejoin="round" stroke-linecap="round"/>
<text x="593.8" y="629.3" font-family="Liberation Sans, sans-serif" font-size="12.5" font-weight="700" fill="#a8b1be" stroke="#fafaf8" stroke-width="2" paint-order="stroke" textLength="42.5" lengthAdjust="spacingAndGlyphs">Bitonto</text>
<text x="1045.5" y="806.8" font-family="Liberation Sans, sans-serif" font-size="12.5" font-weight="700" fill="#a8b1be" stroke="#fafaf8" stroke-width="2" paint-order="stroke" textLength="54.5" lengthAdjust="spacingAndGlyphs">Modugno</text>
<text x="1773.0" y="937.5" font-family="Liberation Sans, sans-serif" font-size="12.5" font-weight="700" fill="#a8b1be" stroke="#fafaf8" stroke-width="2" paint-order="stroke" textLength="53.2" lengthAdjust="spacingAndGlyphs">Triggiano</text>
<text x="1582.0" y="1060.8" font-family="Liberation Sans, sans-serif" font-size="12.5" font-weight="700" fill="#a8b1be" stroke="#fafaf8" stroke-width="2" paint-order="stroke" textLength="58.5" lengthAdjust="spacingAndGlyphs">Valenzano</text>
<text x="623.8" y="977.8" font-family="Liberation Sans, sans-serif" font-size="12.5" font-weight="700" fill="#a8b1be" stroke="#fafaf8" stroke-width="2" paint-order="stroke" textLength="30.8" lengthAdjust="spacingAndGlyphs">Palo c</text>
<text x="659.5" y="1278.3" font-family="Liberation Sans, sans-serif" font-size="12.5" font-weight="700" fill="#a8b1be" stroke="#fafaf8" stroke-width="2" paint-order="stroke" textLength="84.8" lengthAdjust="spacingAndGlyphs">Grumo Appula</text>
<text x="1522.5" y="1341.0" font-family="Liberation Sans, sans-serif" font-size="12.5" font-weight="700" fill="#a8b1be" stroke="#fafaf8" stroke-width="2" paint-order="stroke" textLength="32.0" lengthAdjust="spacingAndGlyphs">Adelfi</text>
<text x="2109.7" y="1149.7" font-family="Liberation Sans, sans-serif" font-size="12.5" font-weight="700" fill="#a8b1be" stroke="#fafaf8" stroke-width="2" paint-order="stroke" textLength="60.6" lengthAdjust="spacingAndGlyphs">Noicattaro</text>
<text x="2240.0" y="1294.3" font-family="Liberation Sans, sans-serif" font-size="12.5" font-weight="700" fill="#a8b1be" stroke="#fafaf8" stroke-width="2" paint-order="stroke" textLength="20.5" lengthAdjust="spacingAndGlyphs">ano</text>
<g fill="#2f55cc" stroke="#fff" stroke-width="2.6"><circle cx="833.0" cy="210.0" r="9.9"/><circle cx="867.5" cy="212.5" r="9.9"/><circle cx="879.3" cy="217.7" r="9.9"/><circle cx="879.8" cy="218.6" r="9.9"/><circle cx="880.9" cy="219.1" r="9.9"/><circle cx="886.6" cy="219.7" r="9.9"/><circle cx="884.9" cy="219.7" r="9.9"/><circle cx="857.5" cy="220.0" r="9.9"/><circle cx="825.5" cy="221.2" r="9.9"/><circle cx="889.4" cy="221.5" r="9.9"/><circle cx="883.8" cy="222.5" r="9.9"/><circle cx="892.5" cy="222.5" r="9.9"/><circle cx="879.1" cy="223.2" r="9.9"/><circle cx="867.5" cy="223.8" r="9.9"/><circle cx="883.5" cy="223.9" r="9.9"/><circle cx="887.1" cy="224.3" r="9.9"/><circle cx="883.9" cy="224.9" r="9.9"/><circle cx="898.6" cy="225.6" r="9.9"/><circle cx="906.2" cy="227.0" r="9.9"/><circle cx="843.8" cy="227.5" r="9.9"/><circle cx="857.5" cy="228.8" r="9.9"/><circle cx="892.3" cy="228.9" r="9.9"/><circle cx="882.0" cy="229.5" r="9.9"/><circle cx="911.8" cy="229.6" r="9.9"/><circle cx="918.9" cy="229.9" r="9.9"/><circle cx="885.0" cy="230.0" r="9.9"/><circle cx="914.7" cy="230.9" r="9.9"/><circle cx="902.0" cy="231.0" r="9.9"/><circle cx="894.1" cy="231.6" r="9.9"/><circle cx="921.8" cy="232.1" r="9.9"/><circle cx="880.5" cy="233.0" r="9.9"/><circle cx="914.9" cy="233.2" r="9.9"/><circle cx="907.0" cy="234.4" r="9.9"/><circle cx="891.0" cy="234.4" r="9.9"/><circle cx="885.4" cy="234.6" r="9.9"/><circle cx="900.0" cy="235.0" r="9.9"/><circle cx="862.5" cy="236.2" r="9.9"/><circle cx="910.0" cy="236.2" r="9.9"/><circle cx="837.5" cy="237.0" r="9.9"/><circle cx="900.4" cy="237.7" r="9.9"/><circle cx="927.6" cy="237.9" r="9.9"/><circle cx="891.8" cy="238.0" r="9.9"/><circle cx="853.8" cy="238.0" r="9.9"/><circle cx="887.4" cy="238.3" r="9.9"/><circle cx="896.6" cy="238.4" r="9.9"/><circle cx="922.8" cy="238.8" r="9.9"/><circle cx="910.4" cy="239.7" r="9.9"/><circle cx="887.5" cy="240.0" r="9.9"/><circle cx="882.1" cy="240.4" r="9.9"/><circle cx="947.5" cy="241.2" r="9.9"/><circle cx="907.6" cy="241.6" r="9.9"/><circle cx="901.5" cy="241.7" r="9.9"/><circle cx="927.5" cy="242.5" r="9.9"/><circle cx="934.4" cy="242.8" r="9.9"/><circle cx="929.6" cy="243.0" r="9.9"/><circle cx="902.5" cy="245.0" r="9.9"/><circle cx="915.0" cy="245.0" r="9.9"/><circle cx="935.0" cy="245.0" r="9.9"/><circle cx="953.8" cy="245.0" r="9.9"/><circle cx="903.7" cy="245.3" r="9.9"/><circle cx="904.2" cy="248.1" r="9.9"/><circle cx="931.3" cy="249.6" r="9.9"/><circle cx="895.0" cy="250.0" r="9.9"/><circle cx="911.1" cy="250.0" r="9.9"/><circle cx="912.8" cy="250.3" r="9.9"/><circle cx="905.0" cy="252.5" r="9.9"/><circle cx="932.5" cy="252.5" r="9.9"/><circle cx="918.1" cy="252.9" r="9.9"/><circle cx="962.5" cy="255.0" r="9.9"/><circle cx="962.4" cy="255.1" r="9.9"/><circle cx="877.5" cy="255.5" r="9.9"/><circle cx="966.6" cy="255.6" r="9.9"/><circle cx="963.1" cy="255.7" r="9.9"/><circle cx="964.4" cy="259.2" r="9.9"/><circle cx="888.8" cy="260.0" r="9.9"/><circle cx="971.2" cy="260.0" r="9.9"/><circle cx="982.5" cy="262.0" r="9.9"/><circle cx="922.5" cy="262.5" r="9.9"/><circle cx="963.3" cy="262.9" r="9.9"/><circle cx="970.0" cy="263.8" r="9.9"/><circle cx="897.0" cy="265.0" r="9.9"/><circle cx="941.2" cy="265.0" r="9.9"/><circle cx="1010.0" cy="265.0" r="9.9"/><circle cx="993.8" cy="266.2" r="9.9"/><circle cx="916.2" cy="267.0" r="9.9"/><circle cx="964.3" cy="267.3" r="9.9"/><circle cx="1014.0" cy="267.9" r="9.9"/><circle cx="1033.8" cy="268.0" r="9.9"/><circle cx="981.8" cy="268.5" r="9.9"/><circle cx="1052.5" cy="268.8" r="9.9"/><circle cx="972.9" cy="269.5" r="9.9"/><circle cx="984.7" cy="269.6" r="9.9"/><circle cx="976.7" cy="270.0" r="9.9"/><circle cx="955.0" cy="270.0" r="9.9"/><circle cx="982.9" cy="270.2" r="9.9"/><circle cx="965.0" cy="271.2" r="9.9"/><circle cx="1026.5" cy="271.3" r="9.9"/><circle cx="1008.8" cy="271.6" r="9.9"/><circle cx="1032.9" cy="272.2" r="9.9"/><circle cx="977.5" cy="272.5" r="9.9"/><circle cx="1055.0" cy="272.5" r="9.9"/><circle cx="996.8" cy="273.7" r="9.9"/><circle cx="997.0" cy="274.1" r="9.9"/><circle cx="877.0" cy="274.5" r="9.9"/><circle cx="905.0" cy="275.0" r="9.9"/><circle cx="1005.0" cy="275.0" r="9.9"/><circle cx="1020.0" cy="275.0" r="9.9"/><circle cx="1030.0" cy="275.0" r="9.9"/><circle cx="1042.0" cy="276.4" r="9.9"/><circle cx="997.5" cy="276.9" r="9.9"/><circle cx="1038.3" cy="277.5" r="9.9"/><circle cx="1003.4" cy="277.8" r="9.9"/><circle cx="992.0" cy="278.2" r="9.9"/><circle cx="1028.1" cy="278.3" r="9.9"/><circle cx="1019.5" cy="278.9" r="9.9"/><circle cx="1029.5" cy="278.9" r="9.9"/><circle cx="1001.6" cy="279.2" r="9.9"/><circle cx="1012.6" cy="279.5" r="9.9"/><circle cx="1009.5" cy="279.5" r="9.9"/><circle cx="1003.2" cy="279.8" r="9.9"/><circle cx="992.5" cy="280.0" r="9.9"/><circle cx="1026.6" cy="280.0" r="9.9"/><circle cx="987.9" cy="280.1" r="9.9"/><circle cx="996.3" cy="280.7" r="9.9"/><circle cx="1052.0" cy="282.0" r="9.9"/><circle cx="1041.9" cy="282.1" r="9.9"/><circle cx="1042.5" cy="282.3" r="9.9"/><circle cx="1012.5" cy="282.5" r="9.9"/><circle cx="1013.3" cy="283.1" r="9.9"/><circle cx="910.0" cy="283.8" r="9.9"/><circle cx="1016.4" cy="284.6" r="9.9"/><circle cx="985.0" cy="285.0" r="9.9"/><circle cx="1016.0" cy="285.1" r="9.9"/><circle cx="992.4" cy="285.3" r="9.9"/><circle cx="1002.0" cy="285.5" r="9.9"/><circle cx="1037.8" cy="285.6" r="9.9"/><circle cx="990.4" cy="286.1" r="9.9"/><circle cx="1008.4" cy="287.1" r="9.9"/><circle cx="1017.7" cy="287.8" r="9.9"/><circle cx="1007.5" cy="288.1" r="9.9"/><circle cx="1014.2" cy="288.5" r="9.9"/><circle cx="1011.1" cy="288.7" r="9.9"/><circle cx="1006.3" cy="288.8" r="9.9"/><circle cx="952.5" cy="290.0" r="9.9"/><circle cx="967.5" cy="290.0" r="9.9"/><circle cx="1027.5" cy="290.0" r="9.9"/><circle cx="1017.5" cy="292.5" r="9.9"/><circle cx="917.0" cy="293.2" r="9.9"/><circle cx="871.2" cy="293.8" r="9.9"/><circle cx="959.5" cy="293.8" r="9.9"/><circle cx="866.2" cy="300.0" r="9.9"/><circle cx="973.8" cy="300.0" r="9.9"/><circle cx="985.0" cy="300.0" r="9.9"/><circle cx="1039.5" cy="303.0" r="9.9"/><circle cx="863.8" cy="303.8" r="9.9"/><circle cx="975.0" cy="309.4" r="9.9"/><circle cx="982.3" cy="309.5" r="9.9"/><circle cx="1010.4" cy="309.6" r="9.9"/><circle cx="959.4" cy="309.7" r="9.9"/><circle cx="963.0" cy="311.3" r="9.9"/><circle cx="1026.3" cy="313.4" r="9.9"/><circle cx="976.3" cy="314.4" r="9.9"/><circle cx="976.5" cy="314.4" r="9.9"/><circle cx="960.3" cy="314.4" r="9.9"/><circle cx="1019.2" cy="314.7" r="9.9"/><circle cx="1005.8" cy="315.0" r="9.9"/><circle cx="1080.8" cy="315.5" r="9.9"/><circle cx="964.5" cy="315.8" r="9.9"/><circle cx="975.4" cy="315.9" r="9.9"/><circle cx="993.8" cy="316.5" r="9.9"/><circle cx="1021.2" cy="317.5" r="9.9"/><circle cx="960.0" cy="317.6" r="9.9"/><circle cx="979.1" cy="318.9" r="9.9"/><circle cx="995.8" cy="319.2" r="9.9"/><circle cx="961.7" cy="319.3" r="9.9"/><circle cx="977.4" cy="319.3" r="9.9"/><circle cx="962.5" cy="320.0" r="9.9"/><circle cx="970.0" cy="320.0" r="9.9"/><circle cx="1017.7" cy="320.1" r="9.9"/><circle cx="1026.9" cy="320.1" r="9.9"/><circle cx="964.1" cy="320.4" r="9.9"/><circle cx="1100.8" cy="320.5" r="9.9"/><circle cx="1030.0" cy="321.2" r="9.9"/><circle cx="1013.2" cy="321.4" r="9.9"/><circle cx="979.6" cy="322.1" r="9.9"/><circle cx="980.0" cy="322.5" r="9.9"/><circle cx="970.9" cy="322.7" r="9.9"/><circle cx="994.9" cy="323.6" r="9.9"/><circle cx="990.3" cy="323.6" r="9.9"/><circle cx="986.6" cy="324.0" r="9.9"/><circle cx="979.5" cy="324.4" r="9.9"/><circle cx="1020.0" cy="325.0" r="9.9"/><circle cx="963.0" cy="326.2" r="9.9"/><circle cx="930.8" cy="327.0" r="9.9"/></g>
<g transform="translate(1001.2,327.0)"><path d="M0,0 C-5,-9 -14.35,-20 -14.35,-32.7 A14.35,14.35 0 1 1 14.35,-32.7 C14.35,-20 5,-9 0,0 Z" fill="#bb7fbc" stroke="#fff" stroke-width="3" stroke-linejoin="round" paint-order="stroke"/><circle cx="0" cy="-32.7" r="6.6" fill="#f7f0f9"/></g>
<g fill="#2f55cc" stroke="#fff" stroke-width="2.6"><circle cx="1007.9" cy="327.4" r="9.9"/><circle cx="968.4" cy="327.6" r="9.9"/><circle cx="1017.7" cy="327.7" r="9.9"/><circle cx="997.8" cy="328.0" r="9.9"/><circle cx="965.4" cy="328.1" r="9.9"/><circle cx="968.1" cy="328.3" r="9.9"/><circle cx="1056.2" cy="328.8" r="9.9"/><circle cx="978.2" cy="328.9" r="9.9"/><circle cx="842.0" cy="329.2" r="9.9"/><circle cx="970.5" cy="329.5" r="9.9"/><circle cx="1013.8" cy="330.0" r="9.9"/><circle cx="986.1" cy="330.1" r="9.9"/><circle cx="991.8" cy="330.7" r="9.9"/><circle cx="971.3" cy="330.8" r="9.9"/><circle cx="985.7" cy="330.9" r="9.9"/><circle cx="1003.0" cy="331.2" r="9.9"/><circle cx="1000.2" cy="331.9" r="9.9"/><circle cx="990.0" cy="332.5" r="9.9"/><circle cx="1011.2" cy="332.9" r="9.9"/><circle cx="963.8" cy="333.8" r="9.9"/><circle cx="1040.0" cy="333.8" r="9.9"/><circle cx="1009.3" cy="336.6" r="9.9"/><circle cx="1002.5" cy="337.5" r="9.9"/><circle cx="1012.5" cy="337.5" r="9.9"/><circle cx="1021.5" cy="338.1" r="9.9"/><circle cx="943.2" cy="338.2" r="9.9"/><circle cx="1050.0" cy="338.8" r="9.9"/><circle cx="999.0" cy="339.4" r="9.9"/><circle cx="981.2" cy="340.0" r="9.9"/><circle cx="967.8" cy="340.1" r="9.9"/><circle cx="968.0" cy="340.5" r="9.9"/><circle cx="1062.0" cy="342.0" r="9.9"/><circle cx="990.0" cy="343.8" r="9.9"/><circle cx="1003.8" cy="343.8" r="9.9"/><circle cx="993.4" cy="345.3" r="9.9"/><circle cx="1008.7" cy="347.1" r="9.9"/><circle cx="1009.9" cy="347.2" r="9.9"/><circle cx="1008.8" cy="347.5" r="9.9"/><circle cx="1015.0" cy="348.0" r="9.9"/><circle cx="995.0" cy="348.8" r="9.9"/></g>
<g transform="translate(863.2,350.8)"><path d="M0,0 C-5,-9 -14.35,-20 -14.35,-32.7 A14.35,14.35 0 1 1 14.35,-32.7 C14.35,-20 5,-9 0,0 Z" fill="#bb7fbc" stroke="#fff" stroke-width="3" stroke-linejoin="round" paint-order="stroke"/><circle cx="0" cy="-32.7" r="6.6" fill="#f7f0f9"/></g>
<g fill="#2f55cc" stroke="#fff" stroke-width="2.6"><circle cx="1048.0" cy="352.5" r="9.9"/><circle cx="1003.0" cy="354.5" r="9.9"/><circle cx="1102.0" cy="359.5" r="9.9"/><circle cx="1055.0" cy="361.2" r="9.9"/><circle cx="1058.0" cy="363.8" r="9.9"/><circle cx="1128.8" cy="366.2" r="9.9"/><circle cx="1142.5" cy="367.0" r="9.9"/><circle cx="1150.5" cy="367.0" r="9.9"/><circle cx="1107.0" cy="372.0" r="9.9"/><circle cx="1060.0" cy="374.5" r="9.9"/><circle cx="1065.0" cy="375.0" r="9.9"/><circle cx="1158.8" cy="376.2" r="9.9"/><circle cx="1156.2" cy="382.0" r="9.9"/><circle cx="1178.8" cy="383.8" r="9.9"/><circle cx="1174.5" cy="395.8" r="9.9"/><circle cx="1223.8" cy="406.2" r="9.9"/><circle cx="1226.2" cy="412.0" r="9.9"/><circle cx="1245.0" cy="413.8" r="9.9"/><circle cx="1250.0" cy="416.2" r="9.9"/><circle cx="1216.2" cy="418.8" r="9.9"/><circle cx="1264.5" cy="418.8" r="9.9"/><circle cx="1380.0" cy="420.0" r="9.9"/><circle cx="1257.5" cy="422.5" r="9.9"/><circle cx="1383.8" cy="422.5" r="9.9"/><circle cx="1303.8" cy="425.0" r="9.9"/><circle cx="1387.5" cy="425.0" r="9.9"/><circle cx="1307.5" cy="426.2" r="9.9"/><circle cx="1227.5" cy="427.5" r="9.9"/><circle cx="1215.0" cy="428.8" r="9.9"/><circle cx="1343.8" cy="430.0" r="9.9"/><circle cx="1392.5" cy="430.0" r="9.9"/><circle cx="1346.2" cy="431.2" r="9.9"/><circle cx="1265.0" cy="433.8" r="9.9"/><circle cx="1311.2" cy="435.0" r="9.9"/><circle cx="1397.5" cy="435.5" r="9.9"/><circle cx="1350.0" cy="440.0" r="9.9"/><circle cx="1322.5" cy="442.0" r="9.9"/><circle cx="1356.2" cy="447.5" r="9.9"/><circle cx="1062.5" cy="450.0" r="9.9"/><circle cx="1058.8" cy="456.2" r="9.9"/><circle cx="1058.8" cy="460.0" r="9.9"/><circle cx="1360.0" cy="460.0" r="9.9"/><circle cx="1540.7" cy="461.3" r="9.9"/><circle cx="1405.0" cy="461.8" r="9.9"/><circle cx="1340.0" cy="462.0" r="9.9"/><circle cx="1536.5" cy="462.2" r="9.9"/><circle cx="1541.3" cy="462.3" r="9.9"/><circle cx="1539.4" cy="462.5" r="9.9"/><circle cx="1523.3" cy="462.5" r="9.9"/><circle cx="1540.2" cy="463.1" r="9.9"/><circle cx="1525.0" cy="463.8" r="9.9"/><circle cx="1524.5" cy="463.9" r="9.9"/><circle cx="1526.6" cy="464.5" r="9.9"/><circle cx="1536.6" cy="464.7" r="9.9"/><circle cx="1539.6" cy="465.5" r="9.9"/><circle cx="1541.3" cy="466.0" r="9.9"/><circle cx="1540.2" cy="466.1" r="9.9"/><circle cx="1530.2" cy="466.3" r="9.9"/><circle cx="1526.9" cy="466.5" r="9.9"/><circle cx="1532.7" cy="466.7" r="9.9"/><circle cx="1527.6" cy="467.2" r="9.9"/><circle cx="1047.5" cy="468.2" r="9.9"/><circle cx="1402.0" cy="468.2" r="9.9"/><circle cx="1524.7" cy="468.3" r="9.9"/><circle cx="1527.3" cy="468.4" r="9.9"/><circle cx="1534.8" cy="468.4" r="9.9"/><circle cx="1527.5" cy="468.4" r="9.9"/><circle cx="1366.2" cy="469.0" r="9.9"/><circle cx="1528.3" cy="469.6" r="9.9"/><circle cx="1531.2" cy="469.9" r="9.9"/><circle cx="1538.1" cy="470.0" r="9.9"/><circle cx="1531.0" cy="470.3" r="9.9"/><circle cx="1542.5" cy="470.5" r="9.9"/><circle cx="1534.0" cy="470.5" r="9.9"/><circle cx="1532.5" cy="470.8" r="9.9"/><circle cx="1537.0" cy="471.0" r="9.9"/><circle cx="1535.6" cy="471.3" r="9.9"/><circle cx="1041.2" cy="471.5" r="9.9"/><circle cx="1534.8" cy="472.1" r="9.9"/><circle cx="1538.8" cy="472.3" r="9.9"/><circle cx="1527.3" cy="472.6" r="9.9"/><circle cx="1534.4" cy="472.8" r="9.9"/><circle cx="1532.6" cy="472.9" r="9.9"/><circle cx="1527.9" cy="473.1" r="9.9"/><circle cx="1523.3" cy="473.2" r="9.9"/><circle cx="1537.1" cy="473.2" r="9.9"/><circle cx="1538.5" cy="474.4" r="9.9"/><circle cx="1534.1" cy="474.5" r="9.9"/><circle cx="1034.5" cy="474.5" r="9.9"/><circle cx="1536.1" cy="474.7" r="9.9"/><circle cx="1521.1" cy="474.8" r="9.9"/><circle cx="1520.4" cy="475.2" r="9.9"/><circle cx="1539.4" cy="475.2" r="9.9"/><circle cx="1525.1" cy="475.4" r="9.9"/><circle cx="1539.1" cy="475.7" r="9.9"/><circle cx="1532.3" cy="475.8" r="9.9"/><circle cx="1533.1" cy="475.9" r="9.9"/><circle cx="1535.7" cy="476.1" r="9.9"/><circle cx="1530.5" cy="476.7" r="9.9"/><circle cx="1519.7" cy="476.7" r="9.9"/><circle cx="1541.7" cy="476.8" r="9.9"/><circle cx="1531.8" cy="477.0" r="9.9"/><circle cx="1544.1" cy="477.0" r="9.9"/><circle cx="1532.7" cy="477.1" r="9.9"/><circle cx="1348.8" cy="477.5" r="9.9"/><circle cx="1520.5" cy="477.6" r="9.9"/><circle cx="1526.3" cy="477.9" r="9.9"/><circle cx="1528.2" cy="478.0" r="9.9"/><circle cx="1543.2" cy="478.3" r="9.9"/><circle cx="1520.0" cy="478.4" r="9.9"/><circle cx="1536.8" cy="478.4" r="9.9"/><circle cx="1525.1" cy="478.9" r="9.9"/><circle cx="1541.9" cy="479.5" r="9.9"/><circle cx="1524.4" cy="479.8" r="9.9"/><circle cx="1543.2" cy="480.1" r="9.9"/><circle cx="1529.7" cy="480.3" r="9.9"/><circle cx="1543.6" cy="480.5" r="9.9"/><circle cx="1543.1" cy="480.5" r="9.9"/><circle cx="1540.7" cy="480.8" r="9.9"/><circle cx="1535.6" cy="480.9" r="9.9"/><circle cx="1527.3" cy="481.0" r="9.9"/><circle cx="1522.7" cy="481.3" r="9.9"/><circle cx="1518.5" cy="481.6" r="9.9"/><circle cx="1521.2" cy="481.7" r="9.9"/><circle cx="1524.2" cy="482.1" r="9.9"/><circle cx="1522.5" cy="482.4" r="9.9"/><circle cx="1529.6" cy="482.7" r="9.9"/><circle cx="1526.7" cy="483.3" r="9.9"/><circle cx="1518.7" cy="483.3" r="9.9"/><circle cx="1534.3" cy="483.6" r="9.9"/><circle cx="1543.0" cy="483.9" r="9.9"/><circle cx="1534.9" cy="484.4" r="9.9"/><circle cx="1520.4" cy="484.7" r="9.9"/><circle cx="1526.8" cy="484.8" r="9.9"/><circle cx="1527.9" cy="484.9" r="9.9"/><circle cx="1538.8" cy="485.1" r="9.9"/><circle cx="1547.1" cy="485.3" r="9.9"/><circle cx="1545.3" cy="485.6" r="9.9"/><circle cx="1537.3" cy="485.8" r="9.9"/><circle cx="1534.5" cy="486.4" r="9.9"/><circle cx="1521.2" cy="486.5" r="9.9"/><circle cx="1553.2" cy="487.2" r="9.9"/><circle cx="1534.8" cy="487.8" r="9.9"/><circle cx="1526.2" cy="487.8" r="9.9"/><circle cx="1543.3" cy="487.9" r="9.9"/><circle cx="1521.2" cy="488.0" r="9.9"/><circle cx="1523.9" cy="488.1" r="9.9"/><circle cx="1552.8" cy="488.2" r="9.9"/><circle cx="1518.1" cy="488.3" r="9.9"/><circle cx="1524.7" cy="488.5" r="9.9"/><circle cx="1554.9" cy="488.5" r="9.9"/><circle cx="1518.1" cy="488.5" r="9.9"/><circle cx="1522.2" cy="488.9" r="9.9"/><circle cx="1522.6" cy="489.5" r="9.9"/><circle cx="1534.7" cy="489.6" r="9.9"/><circle cx="1521.7" cy="489.6" r="9.9"/><circle cx="1537.9" cy="489.9" r="9.9"/><circle cx="1558.0" cy="490.0" r="9.9"/><circle cx="1552.5" cy="490.3" r="9.9"/><circle cx="1555.6" cy="490.4" r="9.9"/><circle cx="1552.4" cy="490.5" r="9.9"/><circle cx="1345.8" cy="490.8" r="9.9"/><circle cx="1524.4" cy="490.8" r="9.9"/><circle cx="1562.9" cy="490.9" r="9.9"/><circle cx="1564.2" cy="491.3" r="9.9"/><circle cx="1513.5" cy="491.5" r="9.9"/><circle cx="1563.6" cy="491.7" r="9.9"/><circle cx="1523.8" cy="491.8" r="9.9"/><circle cx="1555.8" cy="491.8" r="9.9"/><circle cx="1543.5" cy="491.9" r="9.9"/><circle cx="1533.2" cy="491.9" r="9.9"/><circle cx="1539.4" cy="491.9" r="9.9"/><circle cx="1567.3" cy="492.1" r="9.9"/><circle cx="1553.1" cy="492.4" r="9.9"/><circle cx="1548.3" cy="492.5" r="9.9"/><circle cx="1518.8" cy="492.5" r="9.9"/><circle cx="1563.5" cy="492.6" r="9.9"/><circle cx="1543.0" cy="492.8" r="9.9"/><circle cx="1568.7" cy="492.9" r="9.9"/><circle cx="1559.6" cy="492.9" r="9.9"/><circle cx="1510.8" cy="493.0" r="9.9"/><circle cx="1508.0" cy="493.1" r="9.9"/><circle cx="1541.4" cy="493.2" r="9.9"/><circle cx="1509.9" cy="493.2" r="9.9"/><circle cx="1545.2" cy="493.3" r="9.9"/><circle cx="1524.3" cy="493.4" r="9.9"/><circle cx="1525.4" cy="493.5" r="9.9"/><circle cx="1547.8" cy="493.5" r="9.9"/><circle cx="1534.3" cy="493.5" r="9.9"/><circle cx="1572.1" cy="493.8" r="9.9"/><circle cx="1501.2" cy="493.8" r="9.9"/><circle cx="1498.9" cy="494.0" r="9.9"/><circle cx="1571.1" cy="494.0" r="9.9"/><circle cx="1517.0" cy="494.0" r="9.9"/><circle cx="1521.9" cy="494.1" r="9.9"/><circle cx="1569.6" cy="494.1" r="9.9"/><circle cx="1563.2" cy="494.2" r="9.9"/><circle cx="1551.6" cy="494.2" r="9.9"/><circle cx="1526.6" cy="494.2" r="9.9"/><circle cx="1552.8" cy="494.4" r="9.9"/><circle cx="1558.1" cy="494.4" r="9.9"/><circle cx="1506.2" cy="494.6" r="9.9"/><circle cx="1497.2" cy="494.6" r="9.9"/><circle cx="1556.0" cy="494.7" r="9.9"/><circle cx="1537.7" cy="494.7" r="9.9"/><circle cx="1507.5" cy="495.0" r="9.9"/><circle cx="1493.9" cy="495.0" r="9.9"/><circle cx="1566.2" cy="495.1" r="9.9"/><circle cx="1550.5" cy="495.2" r="9.9"/><circle cx="1509.3" cy="495.2" r="9.9"/><circle cx="1513.8" cy="495.3" r="9.9"/><circle cx="1547.7" cy="495.4" r="9.9"/><circle cx="1510.8" cy="495.4" r="9.9"/><circle cx="1561.9" cy="495.5" r="9.9"/><circle cx="1554.3" cy="495.6" r="9.9"/><circle cx="1504.9" cy="495.7" r="9.9"/><circle cx="1502.3" cy="495.7" r="9.9"/><circle cx="1519.5" cy="496.0" r="9.9"/><circle cx="1499.8" cy="496.1" r="9.9"/><circle cx="1498.0" cy="496.1" r="9.9"/><circle cx="1553.9" cy="496.2" r="9.9"/><circle cx="1563.2" cy="496.2" r="9.9"/><circle cx="1522.3" cy="496.2" r="9.9"/><circle cx="1544.1" cy="496.4" r="9.9"/><circle cx="1524.5" cy="496.4" r="9.9"/><circle cx="1516.4" cy="496.4" r="9.9"/><circle cx="1549.5" cy="496.4" r="9.9"/><circle cx="1527.3" cy="496.4" r="9.9"/></g>
<g transform="translate(1443.8,496.4)"><path d="M0,0 C-5,-9 -14.35,-20 -14.35,-32.7 A14.35,14.35 0 1 1 14.35,-32.7 C14.35,-20 5,-9 0,0 Z" fill="#bb7fbc" stroke="#fff" stroke-width="3" stroke-linejoin="round" paint-order="stroke"/><circle cx="0" cy="-32.7" r="6.6" fill="#f7f0f9"/></g>
<g fill="#2f55cc" stroke="#fff" stroke-width="2.6"><circle cx="1544.7" cy="496.5" r="9.9"/><circle cx="1510.6" cy="496.5" r="9.9"/><circle cx="1502.2" cy="496.5" r="9.9"/><circle cx="1494.6" cy="496.6" r="9.9"/><circle cx="1513.4" cy="496.7" r="9.9"/><circle cx="1520.1" cy="497.0" r="9.9"/><circle cx="1499.6" cy="497.2" r="9.9"/><circle cx="1513.3" cy="497.2" r="9.9"/><circle cx="1561.0" cy="497.4" r="9.9"/><circle cx="1545.6" cy="497.5" r="9.9"/><circle cx="1504.3" cy="497.5" r="9.9"/><circle cx="1496.0" cy="497.6" r="9.9"/><circle cx="1492.0" cy="497.6" r="9.9"/><circle cx="1556.9" cy="497.6" r="9.9"/><circle cx="1551.0" cy="497.7" r="9.9"/><circle cx="1490.5" cy="497.9" r="9.9"/><circle cx="1513.7" cy="497.9" r="9.9"/><circle cx="1533.8" cy="497.9" r="9.9"/><circle cx="1545.0" cy="497.9" r="9.9"/><circle cx="1516.5" cy="497.9" r="9.9"/><circle cx="1489.4" cy="497.9" r="9.9"/><circle cx="1499.2" cy="498.1" r="9.9"/><circle cx="1574.6" cy="498.2" r="9.9"/><circle cx="1509.6" cy="498.3" r="9.9"/><circle cx="1565.7" cy="498.3" r="9.9"/><circle cx="1542.3" cy="498.4" r="9.9"/><circle cx="1572.8" cy="498.4" r="9.9"/><circle cx="1544.8" cy="498.5" r="9.9"/><circle cx="1534.9" cy="498.5" r="9.9"/><circle cx="1526.3" cy="498.5" r="9.9"/><circle cx="1493.2" cy="498.6" r="9.9"/><circle cx="1484.6" cy="498.6" r="9.9"/><circle cx="1571.0" cy="498.6" r="9.9"/><circle cx="1437.5" cy="498.8" r="9.9"/><circle cx="1573.6" cy="498.8" r="9.9"/><circle cx="1515.6" cy="498.8" r="9.9"/><circle cx="1556.1" cy="499.1" r="9.9"/><circle cx="1562.9" cy="499.1" r="9.9"/><circle cx="1558.0" cy="499.1" r="9.9"/><circle cx="1565.1" cy="499.2" r="9.9"/><circle cx="1503.6" cy="499.2" r="9.9"/><circle cx="1575.8" cy="499.3" r="9.9"/><circle cx="1530.1" cy="499.3" r="9.9"/><circle cx="1545.6" cy="499.3" r="9.9"/><circle cx="1559.2" cy="499.5" r="9.9"/><circle cx="1437.5" cy="499.5" r="9.9"/><circle cx="1569.1" cy="499.5" r="9.9"/><circle cx="1534.7" cy="499.5" r="9.9"/><circle cx="1514.1" cy="499.8" r="9.9"/><circle cx="1510.6" cy="499.8" r="9.9"/><circle cx="1499.7" cy="499.8" r="9.9"/><circle cx="1558.2" cy="499.8" r="9.9"/><circle cx="1557.7" cy="499.8" r="9.9"/><circle cx="1536.4" cy="499.9" r="9.9"/><circle cx="1563.6" cy="500.0" r="9.9"/><circle cx="1545.0" cy="500.1" r="9.9"/><circle cx="1505.3" cy="500.3" r="9.9"/><circle cx="1514.2" cy="500.4" r="9.9"/><circle cx="1560.5" cy="500.5" r="9.9"/><circle cx="1520.1" cy="500.5" r="9.9"/><circle cx="1562.3" cy="500.7" r="9.9"/><circle cx="1573.2" cy="500.7" r="9.9"/><circle cx="1565.0" cy="500.7" r="9.9"/><circle cx="1520.9" cy="500.9" r="9.9"/><circle cx="1562.2" cy="501.0" r="9.9"/><circle cx="1499.7" cy="501.0" r="9.9"/><circle cx="1545.9" cy="501.1" r="9.9"/><circle cx="1499.6" cy="501.1" r="9.9"/><circle cx="1510.6" cy="501.4" r="9.9"/><circle cx="1576.2" cy="501.6" r="9.9"/><circle cx="1544.1" cy="501.8" r="9.9"/><circle cx="1536.6" cy="502.1" r="9.9"/><circle cx="1489.1" cy="502.3" r="9.9"/><circle cx="1532.7" cy="502.3" r="9.9"/><circle cx="1551.5" cy="502.4" r="9.9"/><circle cx="1531.1" cy="502.5" r="9.9"/><circle cx="1515.9" cy="502.6" r="9.9"/><circle cx="1491.8" cy="502.6" r="9.9"/><circle cx="1559.8" cy="502.7" r="9.9"/></g>
<g transform="translate(1537.5,502.7)"><path d="M0,0 C-5,-9 -14.35,-20 -14.35,-32.7 A14.35,14.35 0 1 1 14.35,-32.7 C14.35,-20 5,-9 0,0 Z" fill="#bb7fbc" stroke="#fff" stroke-width="3" stroke-linejoin="round" paint-order="stroke"/><circle cx="0" cy="-32.7" r="6.6" fill="#f7f0f9"/></g>
<g fill="#2f55cc" stroke="#fff" stroke-width="2.6"><circle cx="1518.9" cy="502.8" r="9.9"/><circle cx="1546.5" cy="502.8" r="9.9"/><circle cx="1539.1" cy="502.8" r="9.9"/><circle cx="1552.8" cy="502.8" r="9.9"/><circle cx="1541.0" cy="502.9" r="9.9"/><circle cx="1574.3" cy="502.9" r="9.9"/><circle cx="1499.8" cy="503.0" r="9.9"/><circle cx="1541.5" cy="503.0" r="9.9"/><circle cx="1525.4" cy="503.0" r="9.9"/><circle cx="1506.0" cy="503.1" r="9.9"/><circle cx="1520.2" cy="503.1" r="9.9"/><circle cx="1573.4" cy="503.1" r="9.9"/><circle cx="1541.3" cy="503.1" r="9.9"/><circle cx="1521.7" cy="503.4" r="9.9"/><circle cx="1531.6" cy="503.5" r="9.9"/><circle cx="1544.2" cy="503.5" r="9.9"/><circle cx="1552.5" cy="503.7" r="9.9"/></g>
<g transform="translate(1426.2,503.9)"><path d="M0,0 C-5,-9 -14.35,-20 -14.35,-32.7 A14.35,14.35 0 1 1 14.35,-32.7 C14.35,-20 5,-9 0,0 Z" fill="#bb7fbc" stroke="#fff" stroke-width="3" stroke-linejoin="round" paint-order="stroke"/><circle cx="0" cy="-32.7" r="6.6" fill="#f7f0f9"/></g>
<g fill="#2f55cc" stroke="#fff" stroke-width="2.6"><circle cx="1530.9" cy="504.1" r="9.9"/><circle cx="1488.3" cy="504.1" r="9.9"/><circle cx="1497.8" cy="504.1" r="9.9"/><circle cx="1567.0" cy="504.1" r="9.9"/><circle cx="1566.9" cy="504.3" r="9.9"/><circle cx="1533.7" cy="504.4" r="9.9"/><circle cx="1484.7" cy="504.4" r="9.9"/><circle cx="1526.7" cy="504.5" r="9.9"/><circle cx="1545.2" cy="504.5" r="9.9"/><circle cx="1515.8" cy="504.6" r="9.9"/><circle cx="1547.5" cy="504.9" r="9.9"/><circle cx="1554.6" cy="505.0" r="9.9"/><circle cx="1484.6" cy="505.1" r="9.9"/><circle cx="1485.0" cy="505.1" r="9.9"/><circle cx="1528.6" cy="505.1" r="9.9"/><circle cx="1570.7" cy="505.2" r="9.9"/><circle cx="1546.2" cy="505.4" r="9.9"/><circle cx="1529.6" cy="505.5" r="9.9"/><circle cx="1529.0" cy="505.6" r="9.9"/><circle cx="1544.5" cy="505.6" r="9.9"/><circle cx="1418.0" cy="505.8" r="9.9"/><circle cx="1542.9" cy="506.0" r="9.9"/><circle cx="1488.5" cy="506.1" r="9.9"/><circle cx="1541.8" cy="506.1" r="9.9"/><circle cx="1492.4" cy="506.2" r="9.9"/><circle cx="1580.9" cy="506.2" r="9.9"/><circle cx="1521.1" cy="506.2" r="9.9"/><circle cx="1418.8" cy="506.2" r="9.9"/><circle cx="1558.0" cy="506.5" r="9.9"/><circle cx="1544.5" cy="506.7" r="9.9"/><circle cx="1563.0" cy="506.7" r="9.9"/><circle cx="1498.0" cy="506.9" r="9.9"/><circle cx="1504.1" cy="507.0" r="9.9"/><circle cx="1536.1" cy="507.1" r="9.9"/><circle cx="1549.4" cy="507.2" r="9.9"/><circle cx="1565.8" cy="507.2" r="9.9"/><circle cx="1558.3" cy="507.3" r="9.9"/><circle cx="1525.6" cy="507.3" r="9.9"/><circle cx="1521.3" cy="507.4" r="9.9"/><circle cx="1578.7" cy="507.4" r="9.9"/><circle cx="1535.5" cy="507.4" r="9.9"/><circle cx="1542.0" cy="507.5" r="9.9"/><circle cx="1576.6" cy="507.6" r="9.9"/><circle cx="1571.2" cy="507.6" r="9.9"/><circle cx="1540.7" cy="507.6" r="9.9"/><circle cx="1529.9" cy="507.6" r="9.9"/><circle cx="1491.9" cy="507.6" r="9.9"/><circle cx="1524.9" cy="507.7" r="9.9"/><circle cx="1527.7" cy="507.8" r="9.9"/><circle cx="1571.8" cy="507.9" r="9.9"/><circle cx="1526.5" cy="508.2" r="9.9"/><circle cx="1537.4" cy="508.3" r="9.9"/><circle cx="1537.2" cy="508.3" r="9.9"/><circle cx="1581.5" cy="508.4" r="9.9"/><circle cx="1485.0" cy="508.4" r="9.9"/><circle cx="1583.0" cy="508.5" r="9.9"/><circle cx="1520.4" cy="508.5" r="9.9"/><circle cx="1503.5" cy="508.5" r="9.9"/><circle cx="1512.3" cy="508.7" r="9.9"/><circle cx="1515.3" cy="508.8" r="9.9"/><circle cx="1504.2" cy="508.9" r="9.9"/><circle cx="1497.0" cy="508.9" r="9.9"/><circle cx="1566.8" cy="508.9" r="9.9"/><circle cx="1494.4" cy="509.0" r="9.9"/><circle cx="1509.8" cy="509.1" r="9.9"/><circle cx="1498.5" cy="509.2" r="9.9"/><circle cx="1485.8" cy="509.2" r="9.9"/><circle cx="1526.9" cy="509.3" r="9.9"/><circle cx="1521.2" cy="509.4" r="9.9"/><circle cx="1485.5" cy="509.4" r="9.9"/><circle cx="1537.2" cy="509.5" r="9.9"/><circle cx="1569.3" cy="509.6" r="9.9"/><circle cx="1483.4" cy="509.6" r="9.9"/><circle cx="1524.0" cy="509.7" r="9.9"/><circle cx="1521.9" cy="509.9" r="9.9"/><circle cx="1545.9" cy="509.9" r="9.9"/><circle cx="1496.0" cy="509.9" r="9.9"/><circle cx="1529.6" cy="510.0" r="9.9"/><circle cx="1546.3" cy="510.0" r="9.9"/><circle cx="1498.2" cy="510.1" r="9.9"/><circle cx="1529.2" cy="510.1" r="9.9"/><circle cx="1496.5" cy="510.2" r="9.9"/><circle cx="1535.4" cy="510.3" r="9.9"/><circle cx="1523.7" cy="510.3" r="9.9"/><circle cx="1567.7" cy="510.3" r="9.9"/><circle cx="1510.2" cy="510.3" r="9.9"/><circle cx="1530.0" cy="510.4" r="9.9"/><circle cx="1567.9" cy="510.4" r="9.9"/><circle cx="1485.4" cy="510.4" r="9.9"/><circle cx="1548.6" cy="510.5" r="9.9"/><circle cx="1544.3" cy="510.5" r="9.9"/><circle cx="1538.6" cy="510.6" r="9.9"/><circle cx="1478.9" cy="510.7" r="9.9"/><circle cx="1481.5" cy="511.0" r="9.9"/><circle cx="1519.6" cy="511.0" r="9.9"/><circle cx="1516.7" cy="511.0" r="9.9"/><circle cx="1521.7" cy="511.0" r="9.9"/><circle cx="1573.9" cy="511.2" r="9.9"/><circle cx="1498.6" cy="511.3" r="9.9"/><circle cx="1573.2" cy="511.4" r="9.9"/><circle cx="1501.6" cy="511.4" r="9.9"/><circle cx="1503.1" cy="511.4" r="9.9"/></g>
<g transform="translate(1462.5,511.4)"><path d="M0,0 C-5,-9 -14.35,-20 -14.35,-32.7 A14.35,14.35 0 1 1 14.35,-32.7 C14.35,-20 5,-9 0,0 Z" fill="#bb7fbc" stroke="#fff" stroke-width="3" stroke-linejoin="round" paint-order="stroke"/><circle cx="0" cy="-32.7" r="6.6" fill="#f7f0f9"/></g>
<g fill="#2f55cc" stroke="#fff" stroke-width="2.6"><circle cx="1563.2" cy="511.7" r="9.9"/><circle cx="1485.0" cy="511.8" r="9.9"/><circle cx="1515.5" cy="512.0" r="9.9"/><circle cx="1345.0" cy="512.0" r="9.9"/><circle cx="1494.2" cy="512.2" r="9.9"/><circle cx="1570.7" cy="512.2" r="9.9"/><circle cx="1503.1" cy="512.4" r="9.9"/><circle cx="1527.5" cy="512.4" r="9.9"/><circle cx="1575.0" cy="512.5" r="9.9"/><circle cx="1498.0" cy="512.5" r="9.9"/><circle cx="1546.6" cy="512.6" r="9.9"/><circle cx="1585.2" cy="512.9" r="9.9"/><circle cx="1542.8" cy="513.1" r="9.9"/><circle cx="1557.8" cy="513.2" r="9.9"/><circle cx="1532.7" cy="513.2" r="9.9"/><circle cx="1496.2" cy="513.4" r="9.9"/><circle cx="1532.8" cy="513.5" r="9.9"/><circle cx="1494.1" cy="513.6" r="9.9"/><circle cx="1577.3" cy="513.6" r="9.9"/><circle cx="1561.1" cy="513.7" r="9.9"/><circle cx="1512.5" cy="513.7" r="9.9"/><circle cx="1551.8" cy="513.8" r="9.9"/><circle cx="1553.1" cy="513.8" r="9.9"/><circle cx="1512.4" cy="513.9" r="9.9"/><circle cx="1499.8" cy="514.0" r="9.9"/><circle cx="1542.9" cy="514.0" r="9.9"/><circle cx="1578.0" cy="514.0" r="9.9"/><circle cx="1488.5" cy="514.2" r="9.9"/><circle cx="1479.2" cy="514.2" r="9.9"/><circle cx="1573.3" cy="514.3" r="9.9"/><circle cx="1563.7" cy="514.4" r="9.9"/><circle cx="1564.3" cy="514.5" r="9.9"/><circle cx="1582.7" cy="514.5" r="9.9"/><circle cx="1479.9" cy="514.5" r="9.9"/><circle cx="1530.9" cy="514.6" r="9.9"/><circle cx="1493.7" cy="514.7" r="9.9"/><circle cx="1492.0" cy="514.7" r="9.9"/><circle cx="1477.6" cy="514.7" r="9.9"/><circle cx="1518.8" cy="514.7" r="9.9"/><circle cx="1544.3" cy="514.8" r="9.9"/><circle cx="1539.9" cy="514.8" r="9.9"/><circle cx="1536.0" cy="514.9" r="9.9"/><circle cx="1523.1" cy="514.9" r="9.9"/><circle cx="1543.5" cy="515.0" r="9.9"/><circle cx="1504.8" cy="515.0" r="9.9"/><circle cx="1583.9" cy="515.1" r="9.9"/><circle cx="1578.3" cy="515.1" r="9.9"/><circle cx="1582.9" cy="515.2" r="9.9"/><circle cx="1520.5" cy="515.3" r="9.9"/><circle cx="1582.9" cy="515.4" r="9.9"/><circle cx="1477.8" cy="515.4" r="9.9"/><circle cx="1504.9" cy="515.4" r="9.9"/><circle cx="1511.2" cy="515.5" r="9.9"/><circle cx="1527.6" cy="515.5" r="9.9"/><circle cx="1500.7" cy="515.6" r="9.9"/><circle cx="1547.3" cy="515.7" r="9.9"/><circle cx="1553.6" cy="515.7" r="9.9"/><circle cx="1559.2" cy="515.8" r="9.9"/><circle cx="1572.5" cy="515.9" r="9.9"/><circle cx="1491.6" cy="516.1" r="9.9"/><circle cx="1538.5" cy="516.1" r="9.9"/><circle cx="1557.0" cy="516.2" r="9.9"/><circle cx="1551.2" cy="516.3" r="9.9"/><circle cx="1523.9" cy="516.3" r="9.9"/><circle cx="1530.5" cy="516.4" r="9.9"/><circle cx="1528.7" cy="516.4" r="9.9"/><circle cx="1528.4" cy="516.4" r="9.9"/><circle cx="1520.2" cy="516.6" r="9.9"/><circle cx="1507.6" cy="516.7" r="9.9"/><circle cx="1513.7" cy="516.8" r="9.9"/><circle cx="1495.1" cy="516.8" r="9.9"/><circle cx="1556.1" cy="516.8" r="9.9"/><circle cx="1521.9" cy="517.0" r="9.9"/><circle cx="1489.4" cy="517.1" r="9.9"/><circle cx="1517.2" cy="517.2" r="9.9"/><circle cx="1575.6" cy="517.4" r="9.9"/><circle cx="1551.8" cy="517.4" r="9.9"/><circle cx="1486.5" cy="517.5" r="9.9"/><circle cx="1497.4" cy="517.5" r="9.9"/><circle cx="1561.7" cy="517.7" r="9.9"/><circle cx="1542.1" cy="517.7" r="9.9"/><circle cx="1570.2" cy="517.8" r="9.9"/><circle cx="1518.7" cy="517.8" r="9.9"/><circle cx="1545.9" cy="517.9" r="9.9"/><circle cx="1532.6" cy="517.9" r="9.9"/><circle cx="1546.2" cy="518.0" r="9.9"/><circle cx="1559.5" cy="518.0" r="9.9"/><circle cx="1583.0" cy="518.0" r="9.9"/><circle cx="1526.7" cy="518.1" r="9.9"/><circle cx="1562.6" cy="518.3" r="9.9"/><circle cx="1546.0" cy="518.4" r="9.9"/><circle cx="1535.0" cy="518.4" r="9.9"/><circle cx="1488.1" cy="518.4" r="9.9"/><circle cx="1589.4" cy="518.4" r="9.9"/><circle cx="1481.6" cy="518.4" r="9.9"/><circle cx="1539.0" cy="518.5" r="9.9"/><circle cx="1531.9" cy="518.6" r="9.9"/><circle cx="1495.9" cy="518.6" r="9.9"/><circle cx="1522.6" cy="518.6" r="9.9"/><circle cx="1490.9" cy="518.7" r="9.9"/><circle cx="1508.7" cy="518.8" r="9.9"/><circle cx="1553.7" cy="519.0" r="9.9"/><circle cx="1139.5" cy="519.0" r="9.9"/><circle cx="1572.3" cy="519.1" r="9.9"/><circle cx="1511.4" cy="519.1" r="9.9"/><circle cx="1576.0" cy="519.1" r="9.9"/><circle cx="1561.3" cy="519.2" r="9.9"/><circle cx="1563.8" cy="519.2" r="9.9"/><circle cx="1569.9" cy="519.2" r="9.9"/><circle cx="1493.9" cy="519.3" r="9.9"/><circle cx="1563.3" cy="519.3" r="9.9"/><circle cx="1571.7" cy="519.3" r="9.9"/><circle cx="1558.1" cy="519.5" r="9.9"/><circle cx="1488.5" cy="519.5" r="9.9"/><circle cx="1529.6" cy="519.7" r="9.9"/><circle cx="1564.2" cy="519.8" r="9.9"/><circle cx="1586.3" cy="519.9" r="9.9"/><circle cx="1491.2" cy="520.0" r="9.9"/><circle cx="1552.0" cy="520.0" r="9.9"/><circle cx="1493.8" cy="520.0" r="9.9"/><circle cx="1493.9" cy="520.2" r="9.9"/><circle cx="1483.3" cy="520.2" r="9.9"/><circle cx="1519.2" cy="520.3" r="9.9"/><circle cx="1517.8" cy="520.3" r="9.9"/><circle cx="1487.2" cy="520.4" r="9.9"/><circle cx="1533.0" cy="520.4" r="9.9"/><circle cx="1564.2" cy="520.5" r="9.9"/><circle cx="1560.4" cy="520.5" r="9.9"/><circle cx="1588.0" cy="520.6" r="9.9"/><circle cx="1570.9" cy="520.6" r="9.9"/><circle cx="1563.0" cy="520.7" r="9.9"/><circle cx="1588.3" cy="520.7" r="9.9"/><circle cx="1494.5" cy="520.8" r="9.9"/><circle cx="1572.1" cy="520.8" r="9.9"/><circle cx="1509.0" cy="520.8" r="9.9"/><circle cx="1513.7" cy="520.8" r="9.9"/><circle cx="1536.0" cy="520.9" r="9.9"/><circle cx="1552.3" cy="520.9" r="9.9"/><circle cx="1579.9" cy="520.9" r="9.9"/><circle cx="1587.6" cy="521.0" r="9.9"/><circle cx="1570.1" cy="521.0" r="9.9"/><circle cx="1481.6" cy="521.1" r="9.9"/><circle cx="1550.5" cy="521.1" r="9.9"/><circle cx="1587.7" cy="521.2" r="9.9"/><circle cx="1507.5" cy="521.2" r="9.9"/><circle cx="1504.3" cy="521.3" r="9.9"/><circle cx="1482.5" cy="521.3" r="9.9"/><circle cx="1475.7" cy="521.3" r="9.9"/><circle cx="1549.0" cy="521.3" r="9.9"/><circle cx="1477.0" cy="521.3" r="9.9"/><circle cx="1578.0" cy="521.5" r="9.9"/><circle cx="1538.1" cy="521.7" r="9.9"/><circle cx="1518.8" cy="521.8" r="9.9"/><circle cx="1520.5" cy="521.8" r="9.9"/><circle cx="1560.6" cy="521.9" r="9.9"/><circle cx="1563.2" cy="521.9" r="9.9"/><circle cx="1532.3" cy="522.0" r="9.9"/><circle cx="1512.1" cy="522.4" r="9.9"/><circle cx="1479.5" cy="522.7" r="9.9"/><circle cx="1501.5" cy="522.7" r="9.9"/><circle cx="1532.7" cy="522.9" r="9.9"/><circle cx="1493.4" cy="522.9" r="9.9"/><circle cx="1486.4" cy="522.9" r="9.9"/><circle cx="1574.0" cy="523.0" r="9.9"/><circle cx="1485.9" cy="523.1" r="9.9"/><circle cx="1590.9" cy="523.1" r="9.9"/><circle cx="1510.0" cy="523.2" r="9.9"/><circle cx="1590.0" cy="523.2" r="9.9"/><circle cx="1569.7" cy="523.3" r="9.9"/><circle cx="1527.1" cy="523.3" r="9.9"/><circle cx="1474.0" cy="523.4" r="9.9"/><circle cx="1498.2" cy="523.4" r="9.9"/><circle cx="1563.8" cy="523.4" r="9.9"/><circle cx="1547.3" cy="523.4" r="9.9"/><circle cx="1568.4" cy="523.4" r="9.9"/><circle cx="1501.9" cy="523.4" r="9.9"/><circle cx="1580.6" cy="523.5" r="9.9"/><circle cx="1489.2" cy="523.7" r="9.9"/><circle cx="1525.1" cy="523.9" r="9.9"/><circle cx="1590.1" cy="523.9" r="9.9"/><circle cx="1492.9" cy="524.0" r="9.9"/><circle cx="1554.2" cy="524.0" r="9.9"/><circle cx="1514.6" cy="524.0" r="9.9"/><circle cx="1516.0" cy="524.1" r="9.9"/><circle cx="1499.0" cy="524.1" r="9.9"/><circle cx="1494.4" cy="524.1" r="9.9"/><circle cx="1534.0" cy="524.2" r="9.9"/><circle cx="1503.1" cy="524.2" r="9.9"/><circle cx="1523.4" cy="524.2" r="9.9"/><circle cx="1493.9" cy="524.3" r="9.9"/><circle cx="1581.8" cy="524.3" r="9.9"/><circle cx="1547.4" cy="524.5" r="9.9"/><circle cx="1557.0" cy="524.7" r="9.9"/><circle cx="1497.7" cy="525.0" r="9.9"/><circle cx="1550.1" cy="525.0" r="9.9"/><circle cx="1525.1" cy="525.2" r="9.9"/><circle cx="1576.3" cy="525.2" r="9.9"/><circle cx="1511.0" cy="525.2" r="9.9"/><circle cx="1517.0" cy="525.2" r="9.9"/><circle cx="1520.0" cy="525.3" r="9.9"/><circle cx="1566.0" cy="525.3" r="9.9"/><circle cx="1568.6" cy="525.5" r="9.9"/><circle cx="1506.1" cy="525.7" r="9.9"/><circle cx="1585.5" cy="525.8" r="9.9"/><circle cx="1514.9" cy="525.8" r="9.9"/><circle cx="1491.1" cy="525.8" r="9.9"/><circle cx="1546.5" cy="525.8" r="9.9"/><circle cx="1552.1" cy="525.8" r="9.9"/><circle cx="1505.6" cy="525.9" r="9.9"/><circle cx="1509.6" cy="525.9" r="9.9"/><circle cx="1594.1" cy="526.0" r="9.9"/><circle cx="1532.2" cy="526.0" r="9.9"/><circle cx="1519.5" cy="526.1" r="9.9"/><circle cx="1499.7" cy="526.3" r="9.9"/><circle cx="1596.0" cy="526.3" r="9.9"/><circle cx="1483.0" cy="526.3" r="9.9"/><circle cx="1486.9" cy="526.4" r="9.9"/><circle cx="1579.8" cy="526.4" r="9.9"/><circle cx="1503.9" cy="526.4" r="9.9"/><circle cx="1564.4" cy="526.5" r="9.9"/><circle cx="1471.6" cy="526.5" r="9.9"/><circle cx="1520.0" cy="526.6" r="9.9"/><circle cx="1584.6" cy="526.6" r="9.9"/><circle cx="1559.7" cy="526.7" r="9.9"/><circle cx="1488.0" cy="526.8" r="9.9"/><circle cx="1525.1" cy="526.9" r="9.9"/><circle cx="1597.4" cy="526.9" r="9.9"/><circle cx="1557.7" cy="526.9" r="9.9"/><circle cx="1564.0" cy="527.0" r="9.9"/><circle cx="1594.5" cy="527.0" r="9.9"/><circle cx="1489.2" cy="527.0" r="9.9"/><circle cx="1489.3" cy="527.0" r="9.9"/><circle cx="1595.3" cy="527.1" r="9.9"/><circle cx="1524.1" cy="527.1" r="9.9"/><circle cx="1594.1" cy="527.2" r="9.9"/><circle cx="1597.8" cy="527.2" r="9.9"/><circle cx="1574.0" cy="527.2" r="9.9"/><circle cx="1479.2" cy="527.2" r="9.9"/><circle cx="1528.2" cy="527.2" r="9.9"/><circle cx="1490.9" cy="527.3" r="9.9"/><circle cx="1475.2" cy="527.3" r="9.9"/><circle cx="1484.4" cy="527.3" r="9.9"/><circle cx="1550.6" cy="527.3" r="9.9"/><circle cx="1567.7" cy="527.4" r="9.9"/><circle cx="1526.2" cy="527.5" r="9.9"/><circle cx="1540.5" cy="527.5" r="9.9"/><circle cx="1480.1" cy="527.6" r="9.9"/><circle cx="1567.1" cy="527.6" r="9.9"/><circle cx="1499.8" cy="527.6" r="9.9"/><circle cx="1539.9" cy="527.7" r="9.9"/><circle cx="1596.3" cy="527.7" r="9.9"/><circle cx="1497.2" cy="527.7" r="9.9"/><circle cx="1502.0" cy="527.9" r="9.9"/><circle cx="1506.1" cy="528.0" r="9.9"/><circle cx="1579.7" cy="528.0" r="9.9"/><circle cx="1541.0" cy="528.0" r="9.9"/><circle cx="1485.5" cy="528.1" r="9.9"/><circle cx="1551.0" cy="528.1" r="9.9"/><circle cx="1538.9" cy="528.1" r="9.9"/><circle cx="1557.5" cy="528.2" r="9.9"/><circle cx="1570.0" cy="528.3" r="9.9"/><circle cx="1479.9" cy="528.3" r="9.9"/><circle cx="1497.3" cy="528.4" r="9.9"/><circle cx="1595.7" cy="528.5" r="9.9"/><circle cx="1599.3" cy="528.5" r="9.9"/><circle cx="1550.2" cy="528.5" r="9.9"/><circle cx="1485.5" cy="528.6" r="9.9"/><circle cx="1574.9" cy="528.8" r="9.9"/><circle cx="1476.3" cy="528.8" r="9.9"/><circle cx="1560.5" cy="528.8" r="9.9"/><circle cx="1598.7" cy="528.9" r="9.9"/><circle cx="1598.3" cy="528.9" r="9.9"/><circle cx="1492.2" cy="528.9" r="9.9"/><circle cx="1568.2" cy="528.9" r="9.9"/><circle cx="1551.2" cy="528.9" r="9.9"/><circle cx="1528.4" cy="528.9" r="9.9"/><circle cx="1572.8" cy="529.0" r="9.9"/><circle cx="1535.1" cy="529.1" r="9.9"/><circle cx="1595.2" cy="529.3" r="9.9"/><circle cx="1528.1" cy="529.3" r="9.9"/><circle cx="1598.1" cy="529.3" r="9.9"/><circle cx="1592.8" cy="529.3" r="9.9"/><circle cx="1579.9" cy="529.3" r="9.9"/><circle cx="1579.6" cy="529.5" r="9.9"/><circle cx="1515.7" cy="529.6" r="9.9"/><circle cx="1547.2" cy="529.6" r="9.9"/><circle cx="1593.5" cy="529.6" r="9.9"/><circle cx="1502.4" cy="529.7" r="9.9"/><circle cx="1474.6" cy="529.8" r="9.9"/><circle cx="1520.5" cy="529.8" r="9.9"/><circle cx="1491.5" cy="529.8" r="9.9"/><circle cx="1538.3" cy="529.9" r="9.9"/><circle cx="1593.6" cy="530.0" r="9.9"/><circle cx="1530.2" cy="530.0" r="9.9"/><circle cx="1581.3" cy="530.1" r="9.9"/><circle cx="1551.3" cy="530.1" r="9.9"/><circle cx="1519.4" cy="530.1" r="9.9"/><circle cx="1489.9" cy="530.1" r="9.9"/><circle cx="1538.6" cy="530.1" r="9.9"/><circle cx="1582.7" cy="530.2" r="9.9"/><circle cx="1546.0" cy="530.2" r="9.9"/><circle cx="1588.5" cy="530.3" r="9.9"/><circle cx="1558.9" cy="530.3" r="9.9"/><circle cx="1544.3" cy="530.4" r="9.9"/><circle cx="1563.9" cy="530.4" r="9.9"/><circle cx="1479.0" cy="530.4" r="9.9"/><circle cx="1571.3" cy="530.4" r="9.9"/><circle cx="1606.1" cy="530.5" r="9.9"/><circle cx="1482.0" cy="530.5" r="9.9"/><circle cx="1554.4" cy="530.5" r="9.9"/><circle cx="1569.0" cy="530.5" r="9.9"/><circle cx="1591.2" cy="530.5" r="9.9"/><circle cx="1597.5" cy="530.6" r="9.9"/><circle cx="1575.0" cy="530.6" r="9.9"/><circle cx="1471.4" cy="530.6" r="9.9"/><circle cx="1488.2" cy="530.6" r="9.9"/><circle cx="1582.1" cy="530.7" r="9.9"/><circle cx="1580.6" cy="530.8" r="9.9"/><circle cx="1478.6" cy="530.8" r="9.9"/><circle cx="1585.0" cy="530.9" r="9.9"/><circle cx="1484.7" cy="530.9" r="9.9"/><circle cx="1521.4" cy="530.9" r="9.9"/><circle cx="1492.1" cy="530.9" r="9.9"/><circle cx="1517.9" cy="531.0" r="9.9"/><circle cx="1523.3" cy="531.0" r="9.9"/><circle cx="1469.0" cy="531.1" r="9.9"/><circle cx="1478.5" cy="531.2" r="9.9"/><circle cx="1471.4" cy="531.2" r="9.9"/><circle cx="1543.1" cy="531.2" r="9.9"/><circle cx="1607.4" cy="531.2" r="9.9"/><circle cx="1469.3" cy="531.3" r="9.9"/><circle cx="1585.1" cy="531.3" r="9.9"/><circle cx="1479.1" cy="531.3" r="9.9"/><circle cx="1468.9" cy="531.3" r="9.9"/><circle cx="1566.8" cy="531.3" r="9.9"/><circle cx="1533.3" cy="531.3" r="9.9"/><circle cx="1568.6" cy="531.3" r="9.9"/><circle cx="1599.5" cy="531.4" r="9.9"/><circle cx="1534.4" cy="531.4" r="9.9"/><circle cx="1597.4" cy="531.5" r="9.9"/><circle cx="1502.6" cy="531.5" r="9.9"/><circle cx="1588.6" cy="531.5" r="9.9"/><circle cx="1588.5" cy="531.5" r="9.9"/><circle cx="1495.7" cy="531.6" r="9.9"/><circle cx="1537.5" cy="531.6" r="9.9"/><circle cx="1512.9" cy="531.7" r="9.9"/><circle cx="1568.9" cy="531.7" r="9.9"/><circle cx="1592.4" cy="531.8" r="9.9"/><circle cx="1515.4" cy="531.8" r="9.9"/><circle cx="1487.1" cy="531.9" r="9.9"/><circle cx="1574.9" cy="532.0" r="9.9"/><circle cx="1425.0" cy="532.0" r="9.9"/><circle cx="1518.9" cy="532.0" r="9.9"/><circle cx="1506.1" cy="532.1" r="9.9"/><circle cx="1573.6" cy="532.1" r="9.9"/><circle cx="1527.1" cy="532.2" r="9.9"/><circle cx="1582.1" cy="532.2" r="9.9"/><circle cx="1592.9" cy="532.3" r="9.9"/><circle cx="1588.4" cy="532.5" r="9.9"/><circle cx="1579.3" cy="532.5" r="9.9"/><circle cx="1571.4" cy="532.5" r="9.9"/><circle cx="1561.0" cy="532.5" r="9.9"/><circle cx="1490.6" cy="532.6" r="9.9"/><circle cx="1542.7" cy="532.7" r="9.9"/><circle cx="1595.9" cy="532.7" r="9.9"/><circle cx="1597.0" cy="532.9" r="9.9"/><circle cx="1617.8" cy="532.9" r="9.9"/><circle cx="1594.6" cy="532.9" r="9.9"/><circle cx="1576.6" cy="533.0" r="9.9"/><circle cx="1574.1" cy="533.1" r="9.9"/><circle cx="1564.2" cy="533.2" r="9.9"/><circle cx="1568.3" cy="533.3" r="9.9"/><circle cx="1488.8" cy="533.4" r="9.9"/><circle cx="1557.1" cy="533.4" r="9.9"/><circle cx="1603.7" cy="533.4" r="9.9"/><circle cx="1516.5" cy="533.5" r="9.9"/><circle cx="1480.2" cy="533.5" r="9.9"/><circle cx="1611.6" cy="533.5" r="9.9"/><circle cx="1548.7" cy="533.6" r="9.9"/><circle cx="1487.4" cy="533.6" r="9.9"/><circle cx="1532.7" cy="533.6" r="9.9"/><circle cx="1539.9" cy="533.7" r="9.9"/><circle cx="1526.6" cy="533.7" r="9.9"/><circle cx="1558.9" cy="533.7" r="9.9"/><circle cx="1597.2" cy="533.7" r="9.9"/><circle cx="1612.8" cy="533.8" r="9.9"/><circle cx="1593.1" cy="533.8" r="9.9"/><circle cx="1604.4" cy="533.8" r="9.9"/><circle cx="1592.3" cy="533.9" r="9.9"/><circle cx="1498.5" cy="534.0" r="9.9"/><circle cx="1472.8" cy="534.0" r="9.9"/><circle cx="1530.9" cy="534.0" r="9.9"/><circle cx="1610.8" cy="534.1" r="9.9"/><circle cx="1476.4" cy="534.1" r="9.9"/><circle cx="1606.3" cy="534.2" r="9.9"/><circle cx="1551.6" cy="534.2" r="9.9"/><circle cx="1485.4" cy="534.2" r="9.9"/><circle cx="1500.7" cy="534.3" r="9.9"/><circle cx="1492.0" cy="534.3" r="9.9"/><circle cx="1587.8" cy="534.4" r="9.9"/><circle cx="1472.0" cy="534.4" r="9.9"/><circle cx="1589.7" cy="534.4" r="9.9"/><circle cx="1542.7" cy="534.4" r="9.9"/><circle cx="1511.8" cy="534.6" r="9.9"/><circle cx="1592.0" cy="534.6" r="9.9"/><circle cx="1533.5" cy="534.8" r="9.9"/><circle cx="1531.3" cy="534.9" r="9.9"/><circle cx="1513.0" cy="534.9" r="9.9"/><circle cx="1566.2" cy="534.9" r="9.9"/><circle cx="1554.2" cy="535.0" r="9.9"/><circle cx="1578.0" cy="535.0" r="9.9"/><circle cx="1577.1" cy="535.2" r="9.9"/></g>
<g transform="translate(1587.5,535.2)"><path d="M0,0 C-5,-9 -14.35,-20 -14.35,-32.7 A14.35,14.35 0 1 1 14.35,-32.7 C14.35,-20 5,-9 0,0 Z" fill="#bb7fbc" stroke="#fff" stroke-width="3" stroke-linejoin="round" paint-order="stroke"/><circle cx="0" cy="-32.7" r="6.6" fill="#f7f0f9"/></g>
<g fill="#2f55cc" stroke="#fff" stroke-width="2.6"><circle cx="1555.2" cy="535.2" r="9.9"/><circle cx="1532.5" cy="535.2" r="9.9"/><circle cx="1527.3" cy="535.3" r="9.9"/><circle cx="1555.1" cy="535.3" r="9.9"/><circle cx="1495.9" cy="535.3" r="9.9"/><circle cx="1606.2" cy="535.3" r="9.9"/><circle cx="1523.0" cy="535.3" r="9.9"/><circle cx="1486.8" cy="535.4" r="9.9"/><circle cx="1591.9" cy="535.4" r="9.9"/><circle cx="1510.2" cy="535.4" r="9.9"/><circle cx="1517.3" cy="535.4" r="9.9"/><circle cx="1562.3" cy="535.5" r="9.9"/><circle cx="1553.5" cy="535.6" r="9.9"/><circle cx="1593.0" cy="535.6" r="9.9"/><circle cx="1530.9" cy="535.7" r="9.9"/><circle cx="1527.8" cy="535.7" r="9.9"/><circle cx="1601.2" cy="535.7" r="9.9"/><circle cx="1470.0" cy="535.8" r="9.9"/><circle cx="1586.4" cy="535.8" r="9.9"/><circle cx="1498.2" cy="535.8" r="9.9"/><circle cx="1538.1" cy="535.9" r="9.9"/><circle cx="1471.0" cy="535.9" r="9.9"/><circle cx="1542.7" cy="535.9" r="9.9"/><circle cx="1540.1" cy="535.9" r="9.9"/><circle cx="1489.1" cy="535.9" r="9.9"/><circle cx="1593.6" cy="536.0" r="9.9"/><circle cx="1555.9" cy="536.1" r="9.9"/><circle cx="1505.7" cy="536.1" r="9.9"/><circle cx="1593.5" cy="536.1" r="9.9"/><circle cx="1560.0" cy="536.2" r="9.9"/><circle cx="1569.4" cy="536.2" r="9.9"/><circle cx="1496.9" cy="536.2" r="9.9"/><circle cx="1594.9" cy="536.2" r="9.9"/><circle cx="1471.3" cy="536.3" r="9.9"/><circle cx="1571.2" cy="536.3" r="9.9"/><circle cx="1544.4" cy="536.3" r="9.9"/><circle cx="1558.7" cy="536.4" r="9.9"/><circle cx="1619.3" cy="536.4" r="9.9"/><circle cx="1555.1" cy="536.4" r="9.9"/><circle cx="1578.4" cy="536.5" r="9.9"/><circle cx="1474.4" cy="536.5" r="9.9"/><circle cx="1499.3" cy="536.5" r="9.9"/><circle cx="1601.7" cy="536.5" r="9.9"/><circle cx="1582.0" cy="536.6" r="9.9"/><circle cx="1590.6" cy="536.6" r="9.9"/><circle cx="1606.2" cy="536.6" r="9.9"/><circle cx="1512.7" cy="536.6" r="9.9"/><circle cx="1519.2" cy="536.6" r="9.9"/><circle cx="1609.3" cy="536.7" r="9.9"/><circle cx="1569.5" cy="536.8" r="9.9"/><circle cx="1594.7" cy="536.8" r="9.9"/><circle cx="1513.2" cy="537.0" r="9.9"/><circle cx="1514.1" cy="537.0" r="9.9"/><circle cx="1502.1" cy="537.0" r="9.9"/><circle cx="1478.2" cy="537.0" r="9.9"/></g>
<g transform="translate(1503.1,537.1)"><path d="M0,0 C-5,-9 -14.35,-20 -14.35,-32.7 A14.35,14.35 0 1 1 14.35,-32.7 C14.35,-20 5,-9 0,0 Z" fill="#bb7fbc" stroke="#fff" stroke-width="3" stroke-linejoin="round" paint-order="stroke"/><circle cx="0" cy="-32.7" r="6.6" fill="#f7f0f9"/></g>
<g fill="#2f55cc" stroke="#fff" stroke-width="2.6"><circle cx="1606.9" cy="537.1" r="9.9"/><circle cx="1503.5" cy="537.2" r="9.9"/><circle cx="1495.6" cy="537.2" r="9.9"/><circle cx="1508.3" cy="537.2" r="9.9"/><circle cx="1500.6" cy="537.3" r="9.9"/><circle cx="1587.1" cy="537.4" r="9.9"/><circle cx="1541.2" cy="537.4" r="9.9"/><circle cx="1504.7" cy="537.4" r="9.9"/><circle cx="1494.9" cy="537.4" r="9.9"/><circle cx="1485.0" cy="537.5" r="9.9"/><circle cx="1564.9" cy="537.5" r="9.9"/><circle cx="1624.2" cy="537.6" r="9.9"/><circle cx="1530.6" cy="537.6" r="9.9"/><circle cx="1474.7" cy="537.6" r="9.9"/><circle cx="1480.7" cy="537.8" r="9.9"/><circle cx="1591.2" cy="537.8" r="9.9"/><circle cx="1563.4" cy="537.8" r="9.9"/><circle cx="1572.0" cy="537.8" r="9.9"/><circle cx="1527.6" cy="537.9" r="9.9"/><circle cx="1586.4" cy="537.9" r="9.9"/><circle cx="1597.0" cy="537.9" r="9.9"/><circle cx="1495.9" cy="537.9" r="9.9"/><circle cx="1470.5" cy="537.9" r="9.9"/><circle cx="1604.8" cy="538.1" r="9.9"/><circle cx="1566.2" cy="538.1" r="9.9"/><circle cx="1520.4" cy="538.2" r="9.9"/><circle cx="1516.7" cy="538.2" r="9.9"/><circle cx="1091.2" cy="538.2" r="9.9"/><circle cx="1527.9" cy="538.3" r="9.9"/><circle cx="1522.0" cy="538.3" r="9.9"/><circle cx="1542.7" cy="538.4" r="9.9"/><circle cx="1499.5" cy="538.4" r="9.9"/><circle cx="1604.3" cy="538.4" r="9.9"/><circle cx="1580.5" cy="538.5" r="9.9"/><circle cx="1549.1" cy="538.7" r="9.9"/><circle cx="1569.2" cy="538.8" r="9.9"/><circle cx="1617.6" cy="538.8" r="9.9"/><circle cx="1480.3" cy="538.8" r="9.9"/><circle cx="1545.8" cy="538.8" r="9.9"/><circle cx="1559.7" cy="538.9" r="9.9"/><circle cx="1597.8" cy="538.9" r="9.9"/><circle cx="1525.0" cy="538.9" r="9.9"/><circle cx="1468.0" cy="539.0" r="9.9"/><circle cx="1522.6" cy="539.1" r="9.9"/><circle cx="1477.8" cy="539.1" r="9.9"/><circle cx="1479.3" cy="539.1" r="9.9"/><circle cx="1599.6" cy="539.2" r="9.9"/><circle cx="1570.5" cy="539.2" r="9.9"/><circle cx="1588.6" cy="539.3" r="9.9"/><circle cx="1500.8" cy="539.3" r="9.9"/><circle cx="1571.6" cy="539.3" r="9.9"/><circle cx="1536.1" cy="539.4" r="9.9"/><circle cx="1565.1" cy="539.5" r="9.9"/><circle cx="1497.6" cy="539.5" r="9.9"/></g>
<g transform="translate(1563.8,539.6)"><path d="M0,0 C-5,-9 -14.35,-20 -14.35,-32.7 A14.35,14.35 0 1 1 14.35,-32.7 C14.35,-20 5,-9 0,0 Z" fill="#bb7fbc" stroke="#fff" stroke-width="3" stroke-linejoin="round" paint-order="stroke"/><circle cx="0" cy="-32.7" r="6.6" fill="#f7f0f9"/></g>
<g fill="#2f55cc" stroke="#fff" stroke-width="2.6"><circle cx="1535.1" cy="539.6" r="9.9"/><circle cx="1562.9" cy="539.7" r="9.9"/><circle cx="1508.0" cy="539.7" r="9.9"/><circle cx="1492.0" cy="539.7" r="9.9"/><circle cx="1488.1" cy="539.8" r="9.9"/><circle cx="1483.8" cy="539.8" r="9.9"/><circle cx="1595.0" cy="539.8" r="9.9"/><circle cx="1594.6" cy="539.9" r="9.9"/><circle cx="1557.1" cy="539.9" r="9.9"/><circle cx="1548.5" cy="539.9" r="9.9"/><circle cx="1604.5" cy="539.9" r="9.9"/><circle cx="1583.2" cy="540.0" r="9.9"/><circle cx="1555.7" cy="540.0" r="9.9"/><circle cx="1518.9" cy="540.0" r="9.9"/><circle cx="1546.1" cy="540.1" r="9.9"/><circle cx="1525.6" cy="540.2" r="9.9"/><circle cx="1489.4" cy="540.2" r="9.9"/><circle cx="1602.3" cy="540.3" r="9.9"/><circle cx="1491.1" cy="540.3" r="9.9"/><circle cx="1464.7" cy="540.3" r="9.9"/><circle cx="1504.0" cy="540.4" r="9.9"/><circle cx="1608.8" cy="540.4" r="9.9"/><circle cx="1517.4" cy="540.4" r="9.9"/><circle cx="1581.5" cy="540.4" r="9.9"/><circle cx="1607.3" cy="540.5" r="9.9"/><circle cx="1490.3" cy="540.5" r="9.9"/><circle cx="1576.1" cy="540.5" r="9.9"/><circle cx="1619.3" cy="540.5" r="9.9"/><circle cx="1495.9" cy="540.5" r="9.9"/><circle cx="1624.3" cy="540.6" r="9.9"/><circle cx="1602.6" cy="540.6" r="9.9"/><circle cx="1535.7" cy="540.7" r="9.9"/><circle cx="1518.5" cy="540.7" r="9.9"/><circle cx="1528.0" cy="540.7" r="9.9"/><circle cx="1580.4" cy="540.7" r="9.9"/><circle cx="1544.2" cy="540.8" r="9.9"/><circle cx="1621.9" cy="540.8" r="9.9"/><circle cx="1568.9" cy="540.8" r="9.9"/><circle cx="1630.7" cy="540.8" r="9.9"/><circle cx="1541.7" cy="540.9" r="9.9"/><circle cx="1587.9" cy="541.0" r="9.9"/><circle cx="1495.6" cy="541.0" r="9.9"/><circle cx="1509.5" cy="541.1" r="9.9"/><circle cx="1511.5" cy="541.2" r="9.9"/><circle cx="1615.6" cy="541.2" r="9.9"/><circle cx="1631.2" cy="541.2" r="9.9"/><circle cx="1615.4" cy="541.3" r="9.9"/><circle cx="1522.1" cy="541.4" r="9.9"/><circle cx="1632.4" cy="541.4" r="9.9"/><circle cx="1564.9" cy="541.4" r="9.9"/><circle cx="1541.1" cy="541.5" r="9.9"/><circle cx="1546.9" cy="541.5" r="9.9"/><circle cx="1533.4" cy="541.6" r="9.9"/><circle cx="1598.7" cy="541.6" r="9.9"/><circle cx="1522.6" cy="541.6" r="9.9"/><circle cx="1481.5" cy="541.7" r="9.9"/><circle cx="1555.6" cy="541.7" r="9.9"/><circle cx="1558.8" cy="541.7" r="9.9"/><circle cx="1481.6" cy="541.8" r="9.9"/><circle cx="1619.3" cy="541.8" r="9.9"/><circle cx="1621.6" cy="541.8" r="9.9"/><circle cx="1594.5" cy="541.8" r="9.9"/><circle cx="1498.5" cy="541.8" r="9.9"/><circle cx="1628.7" cy="541.8" r="9.9"/><circle cx="1527.8" cy="541.9" r="9.9"/><circle cx="1617.2" cy="541.9" r="9.9"/><circle cx="1478.6" cy="541.9" r="9.9"/><circle cx="1601.7" cy="541.9" r="9.9"/><circle cx="1521.5" cy="541.9" r="9.9"/><circle cx="1542.0" cy="542.0" r="9.9"/><circle cx="1523.2" cy="542.0" r="9.9"/><circle cx="1483.1" cy="542.0" r="9.9"/><circle cx="1579.9" cy="542.0" r="9.9"/><circle cx="1087.5" cy="542.0" r="9.9"/><circle cx="1593.5" cy="542.0" r="9.9"/><circle cx="1498.5" cy="542.1" r="9.9"/><circle cx="1503.0" cy="542.1" r="9.9"/><circle cx="1481.7" cy="542.3" r="9.9"/><circle cx="1591.2" cy="542.3" r="9.9"/><circle cx="1565.6" cy="542.3" r="9.9"/><circle cx="1558.2" cy="542.4" r="9.9"/><circle cx="1572.8" cy="542.4" r="9.9"/><circle cx="1496.7" cy="542.4" r="9.9"/><circle cx="1593.7" cy="542.4" r="9.9"/><circle cx="1533.3" cy="542.6" r="9.9"/><circle cx="1512.8" cy="542.7" r="9.9"/><circle cx="1529.4" cy="542.8" r="9.9"/><circle cx="1472.0" cy="542.9" r="9.9"/><circle cx="1496.4" cy="542.9" r="9.9"/><circle cx="1480.1" cy="542.9" r="9.9"/><circle cx="1600.9" cy="542.9" r="9.9"/><circle cx="1540.7" cy="543.0" r="9.9"/><circle cx="1570.6" cy="543.0" r="9.9"/><circle cx="1543.4" cy="543.0" r="9.9"/><circle cx="1613.4" cy="543.0" r="9.9"/><circle cx="1580.8" cy="543.1" r="9.9"/><circle cx="1515.3" cy="543.1" r="9.9"/><circle cx="1520.5" cy="543.1" r="9.9"/><circle cx="1629.1" cy="543.2" r="9.9"/><circle cx="1586.1" cy="543.2" r="9.9"/><circle cx="1584.4" cy="543.2" r="9.9"/><circle cx="1559.4" cy="543.3" r="9.9"/><circle cx="1480.5" cy="543.3" r="9.9"/><circle cx="1568.9" cy="543.3" r="9.9"/><circle cx="1590.4" cy="543.4" r="9.9"/><circle cx="1514.4" cy="543.4" r="9.9"/><circle cx="1630.8" cy="543.4" r="9.9"/><circle cx="1532.1" cy="543.5" r="9.9"/><circle cx="1515.2" cy="543.6" r="9.9"/><circle cx="1493.3" cy="543.6" r="9.9"/><circle cx="1572.9" cy="543.6" r="9.9"/><circle cx="1596.6" cy="543.7" r="9.9"/><circle cx="1430.0" cy="543.8" r="9.9"/><circle cx="1564.7" cy="543.8" r="9.9"/><circle cx="1481.9" cy="543.8" r="9.9"/><circle cx="1565.9" cy="543.9" r="9.9"/></g>
<g transform="translate(1481.2,544.0)"><path d="M0,0 C-5,-9 -14.35,-20 -14.35,-32.7 A14.35,14.35 0 1 1 14.35,-32.7 C14.35,-20 5,-9 0,0 Z" fill="#bb7fbc" stroke="#fff" stroke-width="3" stroke-linejoin="round" paint-order="stroke"/><circle cx="0" cy="-32.7" r="6.6" fill="#f7f0f9"/></g>
<g fill="#2f55cc" stroke="#fff" stroke-width="2.6"><circle cx="1535.9" cy="544.0" r="9.9"/><circle cx="1633.6" cy="544.0" r="9.9"/><circle cx="1500.5" cy="544.0" r="9.9"/><circle cx="1555.3" cy="544.0" r="9.9"/><circle cx="1507.9" cy="544.0" r="9.9"/><circle cx="1603.8" cy="544.1" r="9.9"/><circle cx="1594.0" cy="544.1" r="9.9"/><circle cx="1514.0" cy="544.1" r="9.9"/><circle cx="1463.2" cy="544.1" r="9.9"/><circle cx="1577.0" cy="544.2" r="9.9"/><circle cx="1593.8" cy="544.3" r="9.9"/><circle cx="1467.6" cy="544.3" r="9.9"/><circle cx="1537.8" cy="544.3" r="9.9"/><circle cx="1465.4" cy="544.3" r="9.9"/><circle cx="1520.6" cy="544.3" r="9.9"/><circle cx="1625.5" cy="544.4" r="9.9"/><circle cx="1617.0" cy="544.4" r="9.9"/><circle cx="1541.1" cy="544.4" r="9.9"/><circle cx="1609.2" cy="544.4" r="9.9"/><circle cx="1525.7" cy="544.5" r="9.9"/><circle cx="1431.2" cy="544.5" r="9.9"/><circle cx="1479.0" cy="544.5" r="9.9"/><circle cx="1518.8" cy="544.6" r="9.9"/><circle cx="1614.3" cy="544.6" r="9.9"/><circle cx="1596.4" cy="544.6" r="9.9"/><circle cx="1510.1" cy="544.6" r="9.9"/><circle cx="1557.2" cy="544.7" r="9.9"/><circle cx="1600.7" cy="544.7" r="9.9"/><circle cx="1626.0" cy="544.8" r="9.9"/><circle cx="1605.9" cy="544.8" r="9.9"/><circle cx="1599.6" cy="544.8" r="9.9"/><circle cx="1610.2" cy="544.8" r="9.9"/><circle cx="1607.5" cy="544.8" r="9.9"/><circle cx="1600.8" cy="544.8" r="9.9"/><circle cx="1525.6" cy="544.8" r="9.9"/><circle cx="1547.4" cy="544.9" r="9.9"/><circle cx="1579.7" cy="544.9" r="9.9"/><circle cx="1548.5" cy="545.0" r="9.9"/><circle cx="1430.0" cy="545.0" r="9.9"/><circle cx="1600.1" cy="545.0" r="9.9"/><circle cx="1615.8" cy="545.2" r="9.9"/></g>
<g transform="translate(1578.8,545.2)"><path d="M0,0 C-5,-9 -14.35,-20 -14.35,-32.7 A14.35,14.35 0 1 1 14.35,-32.7 C14.35,-20 5,-9 0,0 Z" fill="#bb7fbc" stroke="#fff" stroke-width="3" stroke-linejoin="round" paint-order="stroke"/><circle cx="0" cy="-32.7" r="6.6" fill="#f7f0f9"/></g>
<g fill="#2f55cc" stroke="#fff" stroke-width="2.6"><circle cx="1617.9" cy="545.2" r="9.9"/><circle cx="1419.6" cy="545.3" r="9.9"/><circle cx="1630.3" cy="545.3" r="9.9"/><circle cx="1625.4" cy="545.4" r="9.9"/><circle cx="1513.1" cy="545.6" r="9.9"/><circle cx="1490.6" cy="545.8" r="9.9"/><circle cx="1620.2" cy="545.9" r="9.9"/><circle cx="1479.2" cy="546.1" r="9.9"/><circle cx="1608.8" cy="546.1" r="9.9"/><circle cx="1492.7" cy="546.1" r="9.9"/><circle cx="1632.8" cy="546.2" r="9.9"/><circle cx="1630.9" cy="546.2" r="9.9"/><circle cx="1594.1" cy="546.3" r="9.9"/></g>
<g transform="translate(1450.0,546.5)"><path d="M0,0 C-5,-9 -14.35,-20 -14.35,-32.7 A14.35,14.35 0 1 1 14.35,-32.7 C14.35,-20 5,-9 0,0 Z" fill="#bb7fbc" stroke="#fff" stroke-width="3" stroke-linejoin="round" paint-order="stroke"/><circle cx="0" cy="-32.7" r="6.6" fill="#f7f0f9"/></g>
<g fill="#2f55cc" stroke="#fff" stroke-width="2.6"><circle cx="1619.8" cy="546.6" r="9.9"/><circle cx="1553.5" cy="546.7" r="9.9"/><circle cx="1608.5" cy="546.7" r="9.9"/><circle cx="1572.1" cy="546.7" r="9.9"/><circle cx="1595.4" cy="546.9" r="9.9"/><circle cx="1567.2" cy="547.1" r="9.9"/><circle cx="1615.0" cy="547.1" r="9.9"/><circle cx="1599.3" cy="547.1" r="9.9"/><circle cx="1571.2" cy="547.2" r="9.9"/><circle cx="1597.6" cy="547.4" r="9.9"/><circle cx="1541.0" cy="547.5" r="9.9"/><circle cx="1606.7" cy="547.7" r="9.9"/><circle cx="1578.9" cy="547.7" r="9.9"/><circle cx="1599.4" cy="547.8" r="9.9"/><circle cx="1620.4" cy="547.9" r="9.9"/><circle cx="1640.2" cy="548.0" r="9.9"/><circle cx="1520.6" cy="548.0" r="9.9"/><circle cx="1612.7" cy="548.2" r="9.9"/><circle cx="1534.8" cy="548.2" r="9.9"/><circle cx="1630.8" cy="548.5" r="9.9"/><circle cx="1642.7" cy="548.6" r="9.9"/><circle cx="1559.4" cy="548.6" r="9.9"/><circle cx="1643.2" cy="548.6" r="9.9"/><circle cx="1630.7" cy="548.8" r="9.9"/><circle cx="1600.0" cy="548.8" r="9.9"/><circle cx="1604.5" cy="548.9" r="9.9"/><circle cx="1613.3" cy="548.9" r="9.9"/><circle cx="1626.4" cy="548.9" r="9.9"/><circle cx="1494.6" cy="548.9" r="9.9"/><circle cx="1520.2" cy="549.0" r="9.9"/><circle cx="1596.9" cy="549.0" r="9.9"/><circle cx="1537.4" cy="549.1" r="9.9"/><circle cx="1637.6" cy="549.2" r="9.9"/><circle cx="1620.5" cy="549.2" r="9.9"/><circle cx="1645.1" cy="549.4" r="9.9"/><circle cx="1607.2" cy="549.5" r="9.9"/><circle cx="1418.6" cy="549.6" r="9.9"/><circle cx="1486.1" cy="549.7" r="9.9"/><circle cx="1551.7" cy="549.7" r="9.9"/><circle cx="1553.5" cy="549.9" r="9.9"/><circle cx="1425.6" cy="550.0" r="9.9"/><circle cx="1430.0" cy="550.1" r="9.9"/><circle cx="1644.1" cy="550.1" r="9.9"/><circle cx="1581.5" cy="550.2" r="9.9"/><circle cx="1593.1" cy="550.3" r="9.9"/><circle cx="1530.6" cy="550.5" r="9.9"/><circle cx="1597.8" cy="550.6" r="9.9"/><circle cx="1623.5" cy="550.6" r="9.9"/><circle cx="1643.4" cy="550.7" r="9.9"/><circle cx="1524.5" cy="550.7" r="9.9"/><circle cx="1541.9" cy="550.9" r="9.9"/><circle cx="1647.0" cy="550.9" r="9.9"/><circle cx="1452.9" cy="550.9" r="9.9"/><circle cx="1511.6" cy="550.9" r="9.9"/><circle cx="1610.9" cy="551.2" r="9.9"/><circle cx="1642.1" cy="551.3" r="9.9"/><circle cx="1488.3" cy="551.3" r="9.9"/><circle cx="1635.6" cy="551.3" r="9.9"/><circle cx="1490.2" cy="551.4" r="9.9"/><circle cx="1638.6" cy="551.4" r="9.9"/><circle cx="1650.1" cy="551.7" r="9.9"/><circle cx="1636.4" cy="551.9" r="9.9"/><circle cx="1627.1" cy="551.9" r="9.9"/><circle cx="1388.8" cy="552.0" r="9.9"/><circle cx="1606.2" cy="552.0" r="9.9"/><circle cx="1620.8" cy="552.1" r="9.9"/><circle cx="1571.5" cy="552.1" r="9.9"/><circle cx="1524.1" cy="552.3" r="9.9"/><circle cx="1610.8" cy="552.5" r="9.9"/><circle cx="1495.3" cy="552.6" r="9.9"/><circle cx="1510.3" cy="552.6" r="9.9"/><circle cx="1517.8" cy="552.7" r="9.9"/><circle cx="1616.9" cy="552.9" r="9.9"/><circle cx="1633.9" cy="553.1" r="9.9"/><circle cx="1478.0" cy="553.2" r="9.9"/><circle cx="1494.2" cy="553.2" r="9.9"/><circle cx="1418.3" cy="553.5" r="9.9"/><circle cx="1633.9" cy="553.5" r="9.9"/><circle cx="1565.1" cy="553.6" r="9.9"/><circle cx="1499.5" cy="553.6" r="9.9"/><circle cx="1628.8" cy="553.7" r="9.9"/><circle cx="1609.6" cy="554.1" r="9.9"/><circle cx="1604.2" cy="554.1" r="9.9"/><circle cx="1582.5" cy="554.3" r="9.9"/><circle cx="1639.5" cy="554.4" r="9.9"/><circle cx="1607.8" cy="554.8" r="9.9"/><circle cx="1616.9" cy="554.9" r="9.9"/><circle cx="1486.6" cy="554.9" r="9.9"/><circle cx="1372.5" cy="555.0" r="9.9"/><circle cx="1656.1" cy="555.0" r="9.9"/><circle cx="1635.5" cy="555.0" r="9.9"/><circle cx="1603.6" cy="555.2" r="9.9"/><circle cx="1534.1" cy="555.3" r="9.9"/><circle cx="1447.0" cy="555.4" r="9.9"/><circle cx="1641.8" cy="555.5" r="9.9"/><circle cx="1424.0" cy="555.6" r="9.9"/><circle cx="1619.8" cy="555.6" r="9.9"/><circle cx="1642.2" cy="555.8" r="9.9"/><circle cx="1453.3" cy="555.9" r="9.9"/><circle cx="1658.9" cy="556.0" r="9.9"/><circle cx="1621.0" cy="556.0" r="9.9"/><circle cx="1625.3" cy="556.1" r="9.9"/><circle cx="1641.6" cy="556.2" r="9.9"/><circle cx="1617.5" cy="556.4" r="9.9"/><circle cx="1609.6" cy="556.6" r="9.9"/><circle cx="1535.2" cy="556.6" r="9.9"/><circle cx="1622.6" cy="556.8" r="9.9"/><circle cx="1640.1" cy="557.0" r="9.9"/><circle cx="1440.0" cy="557.0" r="9.9"/><circle cx="1510.8" cy="557.0" r="9.9"/><circle cx="1618.6" cy="557.1" r="9.9"/><circle cx="1500.5" cy="557.1" r="9.9"/><circle cx="1643.9" cy="557.1" r="9.9"/><circle cx="1488.1" cy="557.2" r="9.9"/><circle cx="1624.1" cy="557.2" r="9.9"/><circle cx="1481.2" cy="557.4" r="9.9"/><circle cx="1650.3" cy="557.4" r="9.9"/><circle cx="1500.6" cy="557.4" r="9.9"/><circle cx="1425.2" cy="557.4" r="9.9"/><circle cx="1621.2" cy="557.5" r="9.9"/><circle cx="1660.7" cy="557.5" r="9.9"/><circle cx="1564.6" cy="557.5" r="9.9"/><circle cx="1461.6" cy="557.6" r="9.9"/><circle cx="1620.0" cy="557.8" r="9.9"/><circle cx="1635.0" cy="557.9" r="9.9"/><circle cx="1648.2" cy="558.0" r="9.9"/><circle cx="1492.7" cy="558.2" r="9.9"/><circle cx="1636.2" cy="558.2" r="9.9"/><circle cx="1456.2" cy="558.3" r="9.9"/><circle cx="1580.8" cy="558.3" r="9.9"/><circle cx="1529.7" cy="558.4" r="9.9"/><circle cx="1646.0" cy="558.5" r="9.9"/><circle cx="1628.7" cy="558.6" r="9.9"/><circle cx="1633.8" cy="558.7" r="9.9"/><circle cx="1620.6" cy="558.7" r="9.9"/><circle cx="1609.3" cy="558.7" r="9.9"/><circle cx="1441.2" cy="558.8" r="9.9"/><circle cx="1652.2" cy="558.8" r="9.9"/><circle cx="1434.6" cy="559.1" r="9.9"/><circle cx="1446.1" cy="559.2" r="9.9"/><circle cx="1590.6" cy="559.3" r="9.9"/><circle cx="1458.1" cy="559.3" r="9.9"/><circle cx="1635.0" cy="559.5" r="9.9"/><circle cx="1552.0" cy="559.6" r="9.9"/><circle cx="1585.9" cy="559.7" r="9.9"/><circle cx="1462.2" cy="560.0" r="9.9"/><circle cx="1611.2" cy="560.0" r="9.9"/><circle cx="1612.5" cy="560.0" r="9.9"/><circle cx="1619.2" cy="560.0" r="9.9"/><circle cx="1625.3" cy="560.2" r="9.9"/><circle cx="1590.1" cy="560.2" r="9.9"/><circle cx="1632.8" cy="560.3" r="9.9"/><circle cx="1536.1" cy="560.5" r="9.9"/><circle cx="1503.0" cy="560.6" r="9.9"/><circle cx="1638.8" cy="560.6" r="9.9"/><circle cx="1491.2" cy="560.7" r="9.9"/><circle cx="1644.8" cy="560.7" r="9.9"/><circle cx="1660.7" cy="560.9" r="9.9"/><circle cx="1657.2" cy="560.9" r="9.9"/><circle cx="1630.5" cy="560.9" r="9.9"/><circle cx="1429.4" cy="561.0" r="9.9"/><circle cx="1455.0" cy="561.2" r="9.9"/><circle cx="1456.2" cy="561.2" r="9.9"/><circle cx="1560.2" cy="561.3" r="9.9"/><circle cx="1544.4" cy="561.5" r="9.9"/><circle cx="1636.6" cy="561.5" r="9.9"/><circle cx="1544.0" cy="561.6" r="9.9"/><circle cx="1487.2" cy="561.6" r="9.9"/><circle cx="1633.4" cy="561.8" r="9.9"/><circle cx="1652.2" cy="561.9" r="9.9"/><circle cx="1662.0" cy="562.0" r="9.9"/><circle cx="1455.0" cy="562.0" r="9.9"/><circle cx="1466.6" cy="562.0" r="9.9"/><circle cx="1494.0" cy="562.1" r="9.9"/><circle cx="1428.3" cy="562.1" r="9.9"/><circle cx="1662.5" cy="562.1" r="9.9"/><circle cx="1643.4" cy="562.1" r="9.9"/><circle cx="1503.3" cy="562.2" r="9.9"/><circle cx="1516.8" cy="562.3" r="9.9"/><circle cx="1645.7" cy="562.3" r="9.9"/><circle cx="1626.3" cy="562.4" r="9.9"/><circle cx="1632.7" cy="562.4" r="9.9"/><circle cx="1665.2" cy="562.4" r="9.9"/><circle cx="1636.7" cy="562.5" r="9.9"/><circle cx="1556.6" cy="562.6" r="9.9"/><circle cx="1580.5" cy="562.6" r="9.9"/><circle cx="1642.8" cy="563.0" r="9.9"/><circle cx="1606.8" cy="563.0" r="9.9"/><circle cx="1584.1" cy="563.3" r="9.9"/><circle cx="1650.8" cy="563.3" r="9.9"/><circle cx="1556.4" cy="563.3" r="9.9"/><circle cx="1484.3" cy="563.4" r="9.9"/><circle cx="1598.8" cy="563.8" r="9.9"/><circle cx="1462.4" cy="563.8" r="9.9"/><circle cx="1487.9" cy="563.9" r="9.9"/><circle cx="1489.7" cy="563.9" r="9.9"/><circle cx="1499.0" cy="564.1" r="9.9"/><circle cx="1656.2" cy="564.4" r="9.9"/><circle cx="1583.8" cy="564.5" r="9.9"/><circle cx="1660.4" cy="564.5" r="9.9"/><circle cx="1378.0" cy="564.5" r="9.9"/><circle cx="1585.0" cy="564.6" r="9.9"/><circle cx="1648.4" cy="564.7" r="9.9"/><circle cx="1656.6" cy="564.8" r="9.9"/><circle cx="1528.3" cy="564.8" r="9.9"/><circle cx="1532.7" cy="564.8" r="9.9"/><circle cx="1523.4" cy="564.9" r="9.9"/><circle cx="1626.4" cy="565.0" r="9.9"/><circle cx="1430.0" cy="565.0" r="9.9"/><circle cx="1430.6" cy="565.0" r="9.9"/><circle cx="1600.0" cy="565.0" r="9.9"/><circle cx="1508.1" cy="565.1" r="9.9"/><circle cx="1567.4" cy="565.2" r="9.9"/><circle cx="1544.5" cy="565.4" r="9.9"/><circle cx="1656.4" cy="565.4" r="9.9"/><circle cx="1522.6" cy="565.5" r="9.9"/><circle cx="1645.9" cy="565.6" r="9.9"/><circle cx="1511.1" cy="565.7" r="9.9"/><circle cx="1500.5" cy="565.7" r="9.9"/><circle cx="1430.0" cy="565.8" r="9.9"/><circle cx="1537.1" cy="565.8" r="9.9"/><circle cx="1642.2" cy="565.8" r="9.9"/><circle cx="1533.2" cy="565.8" r="9.9"/><circle cx="1635.5" cy="565.9" r="9.9"/><circle cx="1571.7" cy="565.9" r="9.9"/><circle cx="1460.0" cy="566.2" r="9.9"/><circle cx="1563.3" cy="566.3" r="9.9"/><circle cx="1574.5" cy="566.4" r="9.9"/><circle cx="1500.8" cy="566.5" r="9.9"/><circle cx="1498.9" cy="566.6" r="9.9"/><circle cx="1578.9" cy="566.6" r="9.9"/><circle cx="1543.0" cy="566.8" r="9.9"/><circle cx="1546.6" cy="566.9" r="9.9"/><circle cx="1564.3" cy="566.9" r="9.9"/><circle cx="1500.2" cy="567.1" r="9.9"/><circle cx="1492.6" cy="567.5" r="9.9"/><circle cx="1546.3" cy="567.5" r="9.9"/><circle cx="1517.8" cy="567.6" r="9.9"/><circle cx="1435.8" cy="568.0" r="9.9"/><circle cx="1496.0" cy="568.0" r="9.9"/><circle cx="1559.4" cy="568.0" r="9.9"/><circle cx="1538.1" cy="568.0" r="9.9"/><circle cx="1431.8" cy="568.3" r="9.9"/><circle cx="1569.5" cy="568.4" r="9.9"/><circle cx="1528.8" cy="568.7" r="9.9"/><circle cx="1489.6" cy="568.7" r="9.9"/><circle cx="1482.4" cy="568.7" r="9.9"/><circle cx="1533.0" cy="568.9" r="9.9"/><circle cx="1563.4" cy="568.9" r="9.9"/><circle cx="1507.6" cy="569.0" r="9.9"/><circle cx="1483.2" cy="569.2" r="9.9"/><circle cx="1542.2" cy="569.2" r="9.9"/><circle cx="1554.9" cy="569.3" r="9.9"/><circle cx="1561.2" cy="569.6" r="9.9"/><circle cx="1498.2" cy="569.7" r="9.9"/><circle cx="1570.2" cy="569.7" r="9.9"/><circle cx="1582.7" cy="569.8" r="9.9"/><circle cx="1569.6" cy="570.0" r="9.9"/><circle cx="1496.5" cy="570.1" r="9.9"/><circle cx="1563.8" cy="570.2" r="9.9"/><circle cx="1508.5" cy="570.3" r="9.9"/><circle cx="1568.4" cy="570.9" r="9.9"/><circle cx="1571.5" cy="571.1" r="9.9"/><circle cx="1506.7" cy="571.2" r="9.9"/><circle cx="1561.7" cy="571.2" r="9.9"/><circle cx="1568.4" cy="571.3" r="9.9"/><circle cx="1486.5" cy="571.5" r="9.9"/><circle cx="1667.2" cy="571.6" r="9.9"/><circle cx="1522.4" cy="571.7" r="9.9"/><circle cx="1535.0" cy="571.9" r="9.9"/><circle cx="1540.6" cy="571.9" r="9.9"/><circle cx="1509.2" cy="571.9" r="9.9"/><circle cx="1635.2" cy="572.0" r="9.9"/><circle cx="1553.6" cy="572.0" r="9.9"/><circle cx="1493.9" cy="572.3" r="9.9"/><circle cx="1467.5" cy="572.5" r="9.9"/><circle cx="1528.7" cy="572.8" r="9.9"/><circle cx="1502.7" cy="572.9" r="9.9"/><circle cx="1549.5" cy="573.0" r="9.9"/><circle cx="1466.2" cy="573.2" r="9.9"/><circle cx="1589.0" cy="573.4" r="9.9"/><circle cx="1541.6" cy="573.4" r="9.9"/><circle cx="1549.2" cy="573.5" r="9.9"/><circle cx="1436.8" cy="573.7" r="9.9"/><circle cx="1467.5" cy="573.8" r="9.9"/><circle cx="1483.0" cy="573.8" r="9.9"/><circle cx="1533.7" cy="574.1" r="9.9"/><circle cx="1540.7" cy="574.3" r="9.9"/><circle cx="1593.5" cy="574.3" r="9.9"/><circle cx="1416.0" cy="574.4" r="9.9"/><circle cx="1480.6" cy="574.4" r="9.9"/><circle cx="1504.1" cy="574.4" r="9.9"/><circle cx="1572.3" cy="574.6" r="9.9"/><circle cx="1527.8" cy="574.9" r="9.9"/><circle cx="1525.4" cy="575.0" r="9.9"/><circle cx="1608.8" cy="575.0" r="9.9"/><circle cx="1656.2" cy="575.0" r="9.9"/><circle cx="1568.7" cy="575.1" r="9.9"/><circle cx="1520.8" cy="575.3" r="9.9"/><circle cx="1496.3" cy="575.4" r="9.9"/><circle cx="1510.1" cy="575.5" r="9.9"/><circle cx="1579.7" cy="575.5" r="9.9"/><circle cx="1622.0" cy="575.7" r="9.9"/><circle cx="1475.4" cy="575.8" r="9.9"/><circle cx="1551.6" cy="575.8" r="9.9"/><circle cx="1528.8" cy="576.0" r="9.9"/><circle cx="1553.8" cy="576.0" r="9.9"/><circle cx="1458.1" cy="576.1" r="9.9"/><circle cx="1588.8" cy="576.2" r="9.9"/><circle cx="1610.0" cy="576.2" r="9.9"/><circle cx="1656.2" cy="576.2" r="9.9"/><circle cx="1521.7" cy="576.3" r="9.9"/><circle cx="1528.9" cy="576.4" r="9.9"/><circle cx="1557.7" cy="576.4" r="9.9"/></g>
<g transform="translate(1529.4,576.5)"><path d="M0,0 C-5,-9 -14.35,-20 -14.35,-32.7 A14.35,14.35 0 1 1 14.35,-32.7 C14.35,-20 5,-9 0,0 Z" fill="#bb7fbc" stroke="#fff" stroke-width="3" stroke-linejoin="round" paint-order="stroke"/><circle cx="0" cy="-32.7" r="6.6" fill="#f7f0f9"/></g>
<g fill="#2f55cc" stroke="#fff" stroke-width="2.6"><circle cx="1517.9" cy="576.6" r="9.9"/><circle cx="1583.5" cy="576.8" r="9.9"/><circle cx="1532.0" cy="576.8" r="9.9"/><circle cx="1541.8" cy="576.8" r="9.9"/><circle cx="1542.3" cy="576.9" r="9.9"/><circle cx="1498.1" cy="577.1" r="9.9"/><circle cx="1421.1" cy="577.2" r="9.9"/><circle cx="1485.5" cy="577.8" r="9.9"/><circle cx="1546.0" cy="577.8" r="9.9"/><circle cx="1468.4" cy="578.1" r="9.9"/><circle cx="1578.0" cy="578.4" r="9.9"/><circle cx="1586.2" cy="578.4" r="9.9"/><circle cx="1576.2" cy="578.4" r="9.9"/><circle cx="1605.3" cy="578.6" r="9.9"/><circle cx="1544.8" cy="578.7" r="9.9"/><circle cx="1541.6" cy="578.9" r="9.9"/><circle cx="1496.0" cy="579.1" r="9.9"/><circle cx="1532.3" cy="579.4" r="9.9"/><circle cx="1580.7" cy="579.5" r="9.9"/><circle cx="1584.6" cy="579.6" r="9.9"/><circle cx="1483.7" cy="579.8" r="9.9"/><circle cx="1612.2" cy="579.8" r="9.9"/><circle cx="1500.7" cy="579.8" r="9.9"/><circle cx="1653.7" cy="579.9" r="9.9"/><circle cx="1456.7" cy="579.9" r="9.9"/><circle cx="1538.3" cy="580.0" r="9.9"/><circle cx="1532.9" cy="580.4" r="9.9"/><circle cx="1491.0" cy="580.4" r="9.9"/><circle cx="1534.0" cy="580.5" r="9.9"/><circle cx="1500.9" cy="580.6" r="9.9"/><circle cx="1515.5" cy="580.8" r="9.9"/><circle cx="1527.3" cy="581.1" r="9.9"/><circle cx="1568.4" cy="581.2" r="9.9"/><circle cx="1486.6" cy="581.8" r="9.9"/><circle cx="1519.4" cy="581.9" r="9.9"/><circle cx="1551.0" cy="581.9" r="9.9"/><circle cx="1551.3" cy="582.3" r="9.9"/><circle cx="1501.0" cy="582.4" r="9.9"/><circle cx="1621.2" cy="582.5" r="9.9"/><circle cx="1621.2" cy="582.5" r="9.9"/><circle cx="1609.2" cy="582.6" r="9.9"/><circle cx="1582.4" cy="582.6" r="9.9"/><circle cx="1582.9" cy="583.0" r="9.9"/><circle cx="1456.6" cy="583.0" r="9.9"/><circle cx="1550.8" cy="583.1" r="9.9"/><circle cx="1426.3" cy="583.3" r="9.9"/><circle cx="1455.6" cy="583.3" r="9.9"/><circle cx="1528.0" cy="583.4" r="9.9"/><circle cx="1642.5" cy="583.8" r="9.9"/><circle cx="1642.5" cy="583.8" r="9.9"/><circle cx="1672.5" cy="583.8" r="9.9"/><circle cx="1673.8" cy="583.8" r="9.9"/><circle cx="1495.8" cy="583.8" r="9.9"/><circle cx="1427.4" cy="583.9" r="9.9"/><circle cx="1502.7" cy="583.9" r="9.9"/><circle cx="1432.2" cy="584.1" r="9.9"/><circle cx="1483.9" cy="584.1" r="9.9"/><circle cx="1579.2" cy="584.5" r="9.9"/><circle cx="1527.7" cy="584.6" r="9.9"/><circle cx="1435.5" cy="584.7" r="9.9"/><circle cx="1520.5" cy="584.7" r="9.9"/><circle cx="1449.7" cy="584.8" r="9.9"/><circle cx="1523.6" cy="584.9" r="9.9"/><circle cx="1500.4" cy="584.9" r="9.9"/><circle cx="1509.5" cy="584.9" r="9.9"/><circle cx="1582.0" cy="585.0" r="9.9"/><circle cx="1519.9" cy="585.7" r="9.9"/><circle cx="1559.7" cy="585.7" r="9.9"/><circle cx="1514.9" cy="585.8" r="9.9"/></g>
<g transform="translate(1540.0,585.8)"><path d="M0,0 C-5,-9 -14.35,-20 -14.35,-32.7 A14.35,14.35 0 1 1 14.35,-32.7 C14.35,-20 5,-9 0,0 Z" fill="#bb7fbc" stroke="#fff" stroke-width="3" stroke-linejoin="round" paint-order="stroke"/><circle cx="0" cy="-32.7" r="6.6" fill="#f7f0f9"/></g>
<g fill="#2f55cc" stroke="#fff" stroke-width="2.6"><circle cx="1526.2" cy="585.9" r="9.9"/><circle cx="1584.6" cy="586.0" r="9.9"/><circle cx="1612.0" cy="586.1" r="9.9"/><circle cx="1633.5" cy="586.3" r="9.9"/><circle cx="1562.2" cy="586.4" r="9.9"/><circle cx="1556.2" cy="586.5" r="9.9"/><circle cx="1592.3" cy="586.9" r="9.9"/><circle cx="1542.3" cy="586.9" r="9.9"/><circle cx="1427.8" cy="587.1" r="9.9"/><circle cx="1536.3" cy="587.2" r="9.9"/><circle cx="1574.1" cy="587.2" r="9.9"/><circle cx="1526.6" cy="587.2" r="9.9"/><circle cx="1577.0" cy="587.2" r="9.9"/><circle cx="1546.4" cy="587.5" r="9.9"/><circle cx="1569.6" cy="587.5" r="9.9"/><circle cx="1570.6" cy="587.7" r="9.9"/><circle cx="1498.1" cy="587.8" r="9.9"/><circle cx="1586.7" cy="587.8" r="9.9"/><circle cx="1498.0" cy="588.0" r="9.9"/><circle cx="1523.1" cy="588.0" r="9.9"/><circle cx="1621.8" cy="588.1" r="9.9"/><circle cx="1587.8" cy="588.2" r="9.9"/><circle cx="1626.8" cy="588.4" r="9.9"/><circle cx="1467.3" cy="588.5" r="9.9"/><circle cx="1432.1" cy="588.5" r="9.9"/><circle cx="1422.5" cy="588.8" r="9.9"/><circle cx="1422.5" cy="588.8" r="9.9"/><circle cx="1560.1" cy="588.8" r="9.9"/><circle cx="1528.6" cy="589.1" r="9.9"/><circle cx="1466.8" cy="589.1" r="9.9"/><circle cx="1562.5" cy="589.2" r="9.9"/><circle cx="1544.1" cy="589.5" r="9.9"/><circle cx="1575.6" cy="589.5" r="9.9"/><circle cx="1422.0" cy="589.5" r="9.9"/><circle cx="1560.9" cy="589.5" r="9.9"/><circle cx="1517.0" cy="589.6" r="9.9"/><circle cx="1581.2" cy="589.7" r="9.9"/><circle cx="1519.5" cy="589.8" r="9.9"/><circle cx="1585.6" cy="590.1" r="9.9"/><circle cx="1505.0" cy="590.1" r="9.9"/><circle cx="1560.7" cy="590.2" r="9.9"/><circle cx="1561.1" cy="590.3" r="9.9"/><circle cx="1589.1" cy="590.3" r="9.9"/><circle cx="1578.2" cy="590.4" r="9.9"/><circle cx="1465.1" cy="590.5" r="9.9"/><circle cx="1561.9" cy="590.5" r="9.9"/><circle cx="1579.8" cy="590.5" r="9.9"/><circle cx="1584.6" cy="590.6" r="9.9"/><circle cx="1515.8" cy="590.6" r="9.9"/><circle cx="1571.0" cy="590.6" r="9.9"/><circle cx="1496.8" cy="590.7" r="9.9"/><circle cx="1542.3" cy="590.8" r="9.9"/><circle cx="1517.8" cy="591.0" r="9.9"/><circle cx="1518.2" cy="591.6" r="9.9"/><circle cx="1648.7" cy="591.8" r="9.9"/><circle cx="1529.5" cy="591.9" r="9.9"/><circle cx="1575.8" cy="591.9" r="9.9"/><circle cx="1581.7" cy="591.9" r="9.9"/><circle cx="1460.0" cy="592.0" r="9.9"/><circle cx="1480.6" cy="592.2" r="9.9"/><circle cx="1581.0" cy="592.3" r="9.9"/><circle cx="1480.5" cy="592.3" r="9.9"/><circle cx="1551.0" cy="592.4" r="9.9"/><circle cx="1486.7" cy="592.5" r="9.9"/><circle cx="1508.0" cy="592.8" r="9.9"/><circle cx="1538.9" cy="593.0" r="9.9"/><circle cx="1568.7" cy="593.1" r="9.9"/><circle cx="1517.4" cy="593.1" r="9.9"/><circle cx="1470.2" cy="593.1" r="9.9"/><circle cx="1532.1" cy="593.1" r="9.9"/><circle cx="1643.5" cy="593.3" r="9.9"/><circle cx="1546.1" cy="593.4" r="9.9"/><circle cx="1510.7" cy="593.7" r="9.9"/><circle cx="1574.9" cy="594.1" r="9.9"/><circle cx="1489.8" cy="594.2" r="9.9"/><circle cx="1497.8" cy="594.5" r="9.9"/><circle cx="1564.2" cy="594.5" r="9.9"/><circle cx="1586.1" cy="594.6" r="9.9"/><circle cx="1455.0" cy="594.6" r="9.9"/><circle cx="1531.3" cy="594.7" r="9.9"/><circle cx="1497.1" cy="594.7" r="9.9"/><circle cx="1565.4" cy="594.9" r="9.9"/><circle cx="1568.0" cy="595.0" r="9.9"/><circle cx="1485.4" cy="595.0" r="9.9"/><circle cx="1679.7" cy="595.0" r="9.9"/><circle cx="1441.2" cy="595.0" r="9.9"/><circle cx="1515.0" cy="595.1" r="9.9"/><circle cx="1526.8" cy="595.4" r="9.9"/><circle cx="1627.2" cy="595.9" r="9.9"/><circle cx="1520.9" cy="595.9" r="9.9"/><circle cx="1536.5" cy="596.1" r="9.9"/><circle cx="1441.2" cy="596.2" r="9.9"/><circle cx="1466.2" cy="596.2" r="9.9"/><circle cx="1547.8" cy="596.3" r="9.9"/><circle cx="1544.5" cy="596.4" r="9.9"/><circle cx="1505.6" cy="596.5" r="9.9"/><circle cx="1520.8" cy="596.6" r="9.9"/><circle cx="1491.1" cy="596.7" r="9.9"/><circle cx="1494.0" cy="596.7" r="9.9"/><circle cx="1507.5" cy="596.9" r="9.9"/><circle cx="1587.2" cy="596.9" r="9.9"/><circle cx="1521.7" cy="596.9" r="9.9"/><circle cx="1542.0" cy="597.0" r="9.9"/><circle cx="1441.2" cy="597.0" r="9.9"/><circle cx="1520.7" cy="597.1" r="9.9"/><circle cx="1490.1" cy="597.1" r="9.9"/><circle cx="1557.0" cy="597.2" r="9.9"/><circle cx="1559.9" cy="597.3" r="9.9"/><circle cx="1537.5" cy="597.4" r="9.9"/><circle cx="1518.6" cy="597.4" r="9.9"/><circle cx="1461.6" cy="597.7" r="9.9"/><circle cx="1534.7" cy="597.9" r="9.9"/><circle cx="1518.3" cy="597.9" r="9.9"/><circle cx="1582.4" cy="597.9" r="9.9"/><circle cx="1562.7" cy="598.0" r="9.9"/><circle cx="1520.8" cy="598.0" r="9.9"/><circle cx="1525.1" cy="598.1" r="9.9"/><circle cx="1460.8" cy="598.1" r="9.9"/><circle cx="1570.3" cy="598.2" r="9.9"/><circle cx="1581.3" cy="598.3" r="9.9"/><circle cx="1496.1" cy="598.3" r="9.9"/><circle cx="1526.0" cy="598.4" r="9.9"/><circle cx="1330.0" cy="598.5" r="9.9"/><circle cx="1558.9" cy="598.7" r="9.9"/><circle cx="1467.5" cy="598.8" r="9.9"/><circle cx="1513.8" cy="598.8" r="9.9"/><circle cx="1555.7" cy="598.8" r="9.9"/><circle cx="1507.5" cy="598.9" r="9.9"/><circle cx="1529.5" cy="599.0" r="9.9"/><circle cx="1547.2" cy="599.1" r="9.9"/><circle cx="1520.6" cy="599.2" r="9.9"/><circle cx="1466.2" cy="599.5" r="9.9"/><circle cx="1570.5" cy="599.6" r="9.9"/><circle cx="1579.3" cy="599.7" r="9.9"/><circle cx="1551.9" cy="599.9" r="9.9"/><circle cx="1586.1" cy="599.9" r="9.9"/><circle cx="1441.2" cy="600.0" r="9.9"/><circle cx="1467.5" cy="601.2" r="9.9"/></g>
<g transform="translate(1578.8,602.1)"><path d="M0,0 C-5,-9 -14.35,-20 -14.35,-32.7 A14.35,14.35 0 1 1 14.35,-32.7 C14.35,-20 5,-9 0,0 Z" fill="#bb7fbc" stroke="#fff" stroke-width="3" stroke-linejoin="round" paint-order="stroke"/><circle cx="0" cy="-32.7" r="6.6" fill="#f7f0f9"/></g>
<g fill="#2f55cc" stroke="#fff" stroke-width="2.6"><circle cx="1662.5" cy="602.5" r="9.9"/><circle cx="1668.8" cy="602.5" r="9.9"/><circle cx="1673.8" cy="602.5" r="9.9"/><circle cx="1514.7" cy="603.8" r="9.9"/><circle cx="1446.7" cy="604.2" r="9.9"/><circle cx="1516.5" cy="604.2" r="9.9"/><circle cx="1503.4" cy="604.7" r="9.9"/><circle cx="1643.8" cy="605.0" r="9.9"/></g>
<g transform="translate(1702.5,605.8)"><path d="M0,0 C-5,-9 -14.35,-20 -14.35,-32.7 A14.35,14.35 0 1 1 14.35,-32.7 C14.35,-20 5,-9 0,0 Z" fill="#bb7fbc" stroke="#fff" stroke-width="3" stroke-linejoin="round" paint-order="stroke"/><circle cx="0" cy="-32.7" r="6.6" fill="#f7f0f9"/></g>
<g fill="#2f55cc" stroke="#fff" stroke-width="2.6"><circle cx="1456.9" cy="606.2" r="9.9"/><circle cx="1806.2" cy="607.0" r="9.9"/><circle cx="1511.1" cy="607.6" r="9.9"/><circle cx="1826.2" cy="608.2" r="9.9"/><circle cx="1491.8" cy="608.8" r="9.9"/><circle cx="1637.5" cy="609.4" r="9.9"/><circle cx="1495.8" cy="609.6" r="9.9"/><circle cx="1538.4" cy="610.3" r="9.9"/><circle cx="1569.9" cy="610.3" r="9.9"/><circle cx="1484.0" cy="610.9" r="9.9"/><circle cx="1537.0" cy="611.0" r="9.9"/><circle cx="1536.6" cy="611.4" r="9.9"/><circle cx="1532.5" cy="611.7" r="9.9"/><circle cx="1568.8" cy="612.3" r="9.9"/><circle cx="1557.6" cy="612.8" r="9.9"/><circle cx="1554.8" cy="613.1" r="9.9"/><circle cx="1496.2" cy="613.5" r="9.9"/><circle cx="1508.0" cy="613.8" r="9.9"/><circle cx="1561.3" cy="613.8" r="9.9"/><circle cx="1562.6" cy="614.0" r="9.9"/><circle cx="1502.8" cy="614.5" r="9.9"/><circle cx="1550.3" cy="615.7" r="9.9"/></g>
<g transform="translate(1538.8,615.8)"><path d="M0,0 C-5,-9 -14.35,-20 -14.35,-32.7 A14.35,14.35 0 1 1 14.35,-32.7 C14.35,-20 5,-9 0,0 Z" fill="#bb7fbc" stroke="#fff" stroke-width="3" stroke-linejoin="round" paint-order="stroke"/><circle cx="0" cy="-32.7" r="6.6" fill="#f7f0f9"/></g>
<g fill="#2f55cc" stroke="#fff" stroke-width="2.6"><circle cx="1532.4" cy="616.0" r="9.9"/><circle cx="1489.4" cy="616.2" r="9.9"/><circle cx="1525.6" cy="616.3" r="9.9"/><circle cx="1508.9" cy="617.6" r="9.9"/><circle cx="1565.8" cy="617.7" r="9.9"/><circle cx="1569.7" cy="617.7" r="9.9"/><circle cx="1519.3" cy="617.8" r="9.9"/><circle cx="1520.3" cy="618.0" r="9.9"/><circle cx="1568.8" cy="618.4" r="9.9"/><circle cx="1504.6" cy="618.7" r="9.9"/><circle cx="1540.1" cy="618.8" r="9.9"/><circle cx="1514.6" cy="619.2" r="9.9"/><circle cx="1813.8" cy="619.5" r="9.9"/></g>
<g transform="translate(1583.8,620.2)"><path d="M0,0 C-5,-9 -14.35,-20 -14.35,-32.7 A14.35,14.35 0 1 1 14.35,-32.7 C14.35,-20 5,-9 0,0 Z" fill="#bb7fbc" stroke="#fff" stroke-width="3" stroke-linejoin="round" paint-order="stroke"/><circle cx="0" cy="-32.7" r="6.6" fill="#f7f0f9"/></g>
<g fill="#2f55cc" stroke="#fff" stroke-width="2.6"><circle cx="1521.2" cy="621.1" r="9.9"/><circle cx="1571.8" cy="621.2" r="9.9"/><circle cx="1462.5" cy="621.2" r="9.9"/><circle cx="1552.8" cy="621.6" r="9.9"/><circle cx="1489.7" cy="621.6" r="9.9"/><circle cx="1533.8" cy="622.7" r="9.9"/><circle cx="1464.7" cy="622.9" r="9.9"/><circle cx="1532.7" cy="623.1" r="9.9"/><circle cx="1443.8" cy="623.1" r="9.9"/><circle cx="1494.3" cy="624.0" r="9.9"/><circle cx="1436.7" cy="624.0" r="9.9"/><circle cx="1554.9" cy="624.7" r="9.9"/><circle cx="1745.0" cy="625.8" r="9.9"/><circle cx="1538.1" cy="626.2" r="9.9"/><circle cx="1287.5" cy="627.0" r="9.9"/><circle cx="1767.5" cy="627.0" r="9.9"/><circle cx="1527.5" cy="627.5" r="9.9"/><circle cx="1464.8" cy="628.6" r="9.9"/><circle cx="1539.7" cy="628.6" r="9.9"/><circle cx="1558.1" cy="628.9" r="9.9"/><circle cx="1468.1" cy="629.4" r="9.9"/><circle cx="1776.2" cy="629.5" r="9.9"/><circle cx="1540.1" cy="629.5" r="9.9"/><circle cx="1496.4" cy="629.6" r="9.9"/><circle cx="1554.9" cy="629.8" r="9.9"/><circle cx="1496.5" cy="630.3" r="9.9"/><circle cx="1522.8" cy="630.5" r="9.9"/><circle cx="1548.7" cy="630.6" r="9.9"/><circle cx="1486.2" cy="631.2" r="9.9"/><circle cx="1535.0" cy="631.2" r="9.9"/><circle cx="1548.8" cy="631.2" r="9.9"/><circle cx="1544.4" cy="631.5" r="9.9"/><circle cx="1533.0" cy="633.0" r="9.9"/><circle cx="1752.5" cy="633.2" r="9.9"/><circle cx="1444.5" cy="633.9" r="9.9"/><circle cx="1530.9" cy="634.2" r="9.9"/><circle cx="1283.2" cy="635.0" r="9.9"/><circle cx="1507.5" cy="635.0" r="9.9"/><circle cx="1553.9" cy="635.4" r="9.9"/></g>
<g transform="translate(1613.8,635.8)"><path d="M0,0 C-5,-9 -14.35,-20 -14.35,-32.7 A14.35,14.35 0 1 1 14.35,-32.7 C14.35,-20 5,-9 0,0 Z" fill="#bb7fbc" stroke="#fff" stroke-width="3" stroke-linejoin="round" paint-order="stroke"/><circle cx="0" cy="-32.7" r="6.6" fill="#f7f0f9"/></g>
<g fill="#2f55cc" stroke="#fff" stroke-width="2.6"><circle cx="1512.9" cy="635.9" r="9.9"/><circle cx="1437.2" cy="636.1" r="9.9"/><circle cx="1408.8" cy="636.2" r="9.9"/><circle cx="1586.2" cy="636.2" r="9.9"/><circle cx="1760.0" cy="637.0" r="9.9"/><circle cx="1543.2" cy="637.2" r="9.9"/><circle cx="1480.0" cy="637.5" r="9.9"/><circle cx="1497.5" cy="637.5" r="9.9"/><circle cx="1602.5" cy="637.5" r="9.9"/><circle cx="1515.7" cy="637.9" r="9.9"/><circle cx="1545.3" cy="638.7" r="9.9"/><circle cx="1442.5" cy="638.8" r="9.9"/><circle cx="1611.0" cy="639.4" r="9.9"/><circle cx="1429.4" cy="639.8" r="9.9"/><circle cx="1542.5" cy="640.0" r="9.9"/><circle cx="1661.9" cy="640.0" r="9.9"/><circle cx="1514.3" cy="640.0" r="9.9"/><circle cx="1476.5" cy="640.7" r="9.9"/><circle cx="1821.2" cy="640.8" r="9.9"/><circle cx="1678.5" cy="641.0" r="9.9"/><circle cx="1517.5" cy="641.2" r="9.9"/><circle cx="1492.5" cy="641.4" r="9.9"/><circle cx="1549.2" cy="642.5" r="9.9"/><circle cx="1581.2" cy="642.5" r="9.9"/><circle cx="1706.0" cy="642.5" r="9.9"/><circle cx="1771.2" cy="642.5" r="9.9"/><circle cx="1551.0" cy="642.5" r="9.9"/><circle cx="1465.9" cy="643.3" r="9.9"/><circle cx="1448.8" cy="643.8" r="9.9"/><circle cx="1575.0" cy="643.8" r="9.9"/><circle cx="1539.6" cy="643.9" r="9.9"/><circle cx="1532.5" cy="644.0" r="9.9"/><circle cx="1475.7" cy="644.0" r="9.9"/><circle cx="1856.2" cy="644.5" r="9.9"/><circle cx="1860.0" cy="644.8" r="9.9"/><circle cx="1535.0" cy="644.9" r="9.9"/><circle cx="1449.5" cy="644.9" r="9.9"/><circle cx="1491.2" cy="645.0" r="9.9"/><circle cx="1501.1" cy="645.4" r="9.9"/><circle cx="1475.4" cy="645.5" r="9.9"/><circle cx="1530.2" cy="646.2" r="9.9"/><circle cx="1568.1" cy="646.2" r="9.9"/><circle cx="1526.2" cy="647.5" r="9.9"/><circle cx="1544.8" cy="649.9" r="9.9"/><circle cx="1536.2" cy="650.0" r="9.9"/><circle cx="1551.2" cy="650.0" r="9.9"/><circle cx="1900.9" cy="651.6" r="9.9"/><circle cx="1755.8" cy="652.0" r="9.9"/><circle cx="1463.3" cy="652.9" r="9.9"/><circle cx="1890.0" cy="653.0" r="9.9"/><circle cx="1447.8" cy="654.9" r="9.9"/><circle cx="1543.8" cy="655.0" r="9.9"/><circle cx="1503.8" cy="656.2" r="9.9"/><circle cx="1620.6" cy="656.2" r="9.9"/><circle cx="1813.8" cy="657.0" r="9.9"/><circle cx="1463.8" cy="657.5" r="9.9"/><circle cx="1470.0" cy="658.1" r="9.9"/><circle cx="1554.3" cy="658.4" r="9.9"/><circle cx="1475.0" cy="658.8" r="9.9"/><circle cx="1480.0" cy="658.8" r="9.9"/><circle cx="1593.1" cy="658.8" r="9.9"/><circle cx="1860.0" cy="659.0" r="9.9"/><circle cx="1858.8" cy="659.5" r="9.9"/><circle cx="1510.0" cy="660.0" r="9.9"/><circle cx="1535.0" cy="660.0" r="9.9"/><circle cx="1612.5" cy="660.0" r="9.9"/><circle cx="1516.0" cy="660.0" r="9.9"/><circle cx="1455.0" cy="662.5" r="9.9"/><circle cx="1597.5" cy="662.5" r="9.9"/><circle cx="1487.9" cy="662.7" r="9.9"/><circle cx="1486.7" cy="663.7" r="9.9"/><circle cx="1516.9" cy="664.4" r="9.9"/><circle cx="1888.7" cy="664.5" r="9.9"/><circle cx="1548.8" cy="665.0" r="9.9"/><circle cx="1899.0" cy="665.3" r="9.9"/><circle cx="1447.5" cy="666.9" r="9.9"/><circle cx="1528.8" cy="666.9" r="9.9"/><circle cx="1538.3" cy="667.1" r="9.9"/><circle cx="1588.8" cy="667.5" r="9.9"/><circle cx="1534.4" cy="668.1" r="9.9"/><circle cx="1469.6" cy="669.0" r="9.9"/><circle cx="1541.2" cy="669.1" r="9.9"/><circle cx="1495.0" cy="670.0" r="9.9"/><circle cx="1598.8" cy="670.0" r="9.9"/><circle cx="1523.1" cy="671.0" r="9.9"/><circle cx="1635.0" cy="671.2" r="9.9"/><circle cx="1816.2" cy="671.5" r="9.9"/><circle cx="1486.5" cy="671.6" r="9.9"/><circle cx="1490.0" cy="672.5" r="9.9"/><circle cx="1403.8" cy="676.2" r="9.9"/><circle cx="1398.8" cy="677.0" r="9.9"/><circle cx="1463.8" cy="677.2" r="9.9"/><circle cx="1503.8" cy="677.2" r="9.9"/><circle cx="1576.2" cy="677.5" r="9.9"/><circle cx="1581.2" cy="678.1" r="9.9"/><circle cx="1556.2" cy="680.0" r="9.9"/><circle cx="1485.0" cy="680.6" r="9.9"/><circle cx="1403.8" cy="682.5" r="9.9"/><circle cx="1447.5" cy="683.1" r="9.9"/><circle cx="1555.0" cy="685.0" r="9.9"/><circle cx="1580.6" cy="686.2" r="9.9"/><circle cx="1597.5" cy="686.2" r="9.9"/><circle cx="1870.4" cy="688.5" r="9.9"/><circle cx="1548.8" cy="691.2" r="9.9"/><circle cx="1581.2" cy="692.5" r="9.9"/><circle cx="1522.5" cy="693.1" r="9.9"/><circle cx="1630.0" cy="693.1" r="9.9"/><circle cx="1977.3" cy="693.4" r="9.9"/><circle cx="1532.5" cy="695.0" r="9.9"/><circle cx="1987.7" cy="696.7" r="9.9"/><circle cx="1483.8" cy="698.1" r="9.9"/><circle cx="1427.5" cy="698.8" r="9.9"/><circle cx="1579.4" cy="700.0" r="9.9"/><circle cx="1766.2" cy="703.2" r="9.9"/><circle cx="1577.5" cy="703.8" r="9.9"/><circle cx="1420.0" cy="705.0" r="9.9"/><circle cx="1758.8" cy="705.8" r="9.9"/></g>
<g transform="translate(1612.0,706.0)"><path d="M0,0 C-5,-9 -14.35,-20 -14.35,-32.7 A14.35,14.35 0 1 1 14.35,-32.7 C14.35,-20 5,-9 0,0 Z" fill="#bb7fbc" stroke="#fff" stroke-width="3" stroke-linejoin="round" paint-order="stroke"/><circle cx="0" cy="-32.7" r="6.6" fill="#f7f0f9"/></g>
<g fill="#2f55cc" stroke="#fff" stroke-width="2.6"><circle cx="1425.0" cy="706.2" r="9.9"/><circle cx="1646.0" cy="707.2" r="9.9"/><circle cx="1980.1" cy="707.6" r="9.9"/><circle cx="1568.8" cy="708.8" r="9.9"/><circle cx="2042.3" cy="708.9" r="9.9"/><circle cx="1493.5" cy="710.6" r="9.9"/><circle cx="1662.2" cy="710.6" r="9.9"/><circle cx="1747.5" cy="710.8" r="9.9"/><circle cx="1993.7" cy="710.9" r="9.9"/><circle cx="2061.4" cy="712.5" r="9.9"/><circle cx="1575.0" cy="713.1" r="9.9"/><circle cx="1513.5" cy="714.8" r="9.9"/><circle cx="1982.2" cy="716.3" r="9.9"/><circle cx="2072.8" cy="717.1" r="9.9"/><circle cx="2008.7" cy="718.5" r="9.9"/><circle cx="2031.9" cy="718.5" r="9.9"/><circle cx="2107.8" cy="721.2" r="9.9"/><circle cx="2083.8" cy="722.6" r="9.9"/><circle cx="2016.9" cy="723.4" r="9.9"/><circle cx="1456.2" cy="725.0" r="9.9"/><circle cx="2052.4" cy="726.1" r="9.9"/><circle cx="1542.2" cy="727.2" r="9.9"/><circle cx="2086.5" cy="728.0" r="9.9"/><circle cx="1478.5" cy="728.5" r="9.9"/><circle cx="2021.0" cy="729.4" r="9.9"/><circle cx="1456.2" cy="730.0" r="9.9"/><circle cx="1218.8" cy="730.8" r="9.9"/><circle cx="1223.8" cy="730.8" r="9.9"/><circle cx="1623.8" cy="731.2" r="9.9"/><circle cx="2096.0" cy="732.1" r="9.9"/><circle cx="1626.9" cy="733.5" r="9.9"/><circle cx="1513.5" cy="734.8" r="9.9"/><circle cx="1644.8" cy="738.1" r="9.9"/><circle cx="2135.6" cy="738.1" r="9.9"/><circle cx="2097.4" cy="739.8" r="9.9"/><circle cx="2146.0" cy="740.3" r="9.9"/><circle cx="1602.2" cy="741.0" r="9.9"/><circle cx="1458.5" cy="741.9" r="9.9"/><circle cx="1536.2" cy="741.9" r="9.9"/><circle cx="1696.2" cy="742.5" r="9.9"/><circle cx="1687.5" cy="743.8" r="9.9"/><circle cx="1373.0" cy="745.8" r="9.9"/><circle cx="2029.7" cy="746.3" r="9.9"/><circle cx="2141.1" cy="751.2" r="9.9"/><circle cx="1698.8" cy="752.5" r="9.9"/><circle cx="1378.8" cy="753.2" r="9.9"/><circle cx="1398.0" cy="753.2" r="9.9"/><circle cx="1688.1" cy="753.5" r="9.9"/><circle cx="1400.0" cy="753.8" r="9.9"/><circle cx="2090.0" cy="756.1" r="9.9"/><circle cx="1531.2" cy="757.2" r="9.9"/><circle cx="2150.6" cy="759.4" r="9.9"/><circle cx="2184.7" cy="759.4" r="9.9"/><circle cx="2187.4" cy="763.5" r="9.9"/><circle cx="1548.5" cy="769.8" r="9.9"/><circle cx="2157.4" cy="769.8" r="9.9"/><circle cx="2214.7" cy="770.3" r="9.9"/><circle cx="1611.0" cy="772.2" r="9.9"/><circle cx="1516.2" cy="772.5" r="9.9"/><circle cx="2169.7" cy="772.5" r="9.9"/><circle cx="2137.5" cy="773.1" r="9.9"/><circle cx="2192.9" cy="773.1" r="9.9"/><circle cx="2206.5" cy="773.1" r="9.9"/><circle cx="2235.2" cy="775.8" r="9.9"/><circle cx="1533.8" cy="776.9" r="9.9"/><circle cx="2198.4" cy="779.9" r="9.9"/><circle cx="1517.5" cy="780.0" r="9.9"/><circle cx="1490.0" cy="780.9" r="9.9"/><circle cx="1489.5" cy="781.5" r="9.9"/><circle cx="2227.0" cy="782.6" r="9.9"/><circle cx="2247.5" cy="784.0" r="9.9"/><circle cx="2218.8" cy="785.3" r="9.9"/><circle cx="1512.5" cy="787.0" r="9.9"/><circle cx="2253.5" cy="787.3" r="9.9"/><circle cx="2274.8" cy="794.9" r="9.9"/><circle cx="2307.5" cy="795.4" r="9.9"/><circle cx="1501.2" cy="801.5" r="9.9"/><circle cx="2310.8" cy="803.1" r="9.9"/><circle cx="1528.8" cy="803.2" r="9.9"/><circle cx="1509.5" cy="809.0" r="9.9"/><circle cx="2322.5" cy="817.5" r="9.9"/><circle cx="1533.8" cy="822.0" r="9.9"/><circle cx="1520.0" cy="823.8" r="9.9"/><circle cx="1535.5" cy="827.0" r="9.9"/><circle cx="1520.0" cy="827.8" r="9.9"/><circle cx="1523.2" cy="849.0" r="9.9"/><circle cx="1551.2" cy="849.0" r="9.9"/><circle cx="1547.5" cy="850.2" r="9.9"/><circle cx="1468.2" cy="853.5" r="9.9"/><circle cx="1507.5" cy="853.5" r="9.9"/><circle cx="1542.5" cy="854.0" r="9.9"/><circle cx="1517.5" cy="861.0" r="9.9"/><circle cx="1542.5" cy="861.5" r="9.9"/><circle cx="1528.8" cy="865.2" r="9.9"/><circle cx="1532.5" cy="867.8" r="9.9"/><circle cx="1472.0" cy="868.5" r="9.9"/><circle cx="1545.0" cy="871.5" r="9.9"/><circle cx="1538.0" cy="877.8" r="9.9"/><circle cx="1519.5" cy="891.0" r="9.9"/><circle cx="1497.0" cy="896.0" r="9.9"/><circle cx="1525.8" cy="922.0" r="9.9"/><circle cx="1507.5" cy="934.0" r="9.9"/><circle cx="1528.8" cy="939.5" r="9.9"/><circle cx="1510.0" cy="940.2" r="9.9"/><circle cx="1505.8" cy="965.8" r="9.9"/><circle cx="1432.0" cy="1049.5" r="9.9"/><circle cx="1410.8" cy="1088.2" r="9.9"/><circle cx="1423.0" cy="1099.8" r="9.9"/></g>
</svg></div>
<div class="a" style="left:563px;top:1379px;width:1995px;height:1px;background:#e0e0e0"></div>
<span class="t" style="left:1373.00px;top:1407.80px;font-size:15px;line-height:15px;color:#666;letter-spacing:-0.074px;">Preview updates automatically when you change settings</span>
<div class="a" style="left:2171.5px;top:1337.5px;width:368.5px;height:20.5px;background:rgba(255,255,255,0.8)"></div>
<svg class="a" style="left:2178.5px;top:1343.6px" width="15" height="10" viewBox="0 0 12 8"><rect width="12" height="4" fill="#4c7be1"/><rect y="4" width="12" height="4" fill="#ffd500"/></svg>
<span class="t" style="left:2197.30px;top:1341.43px;font-size:13.9px;line-height:13.9px;color:#0078a8;letter-spacing:0.557px;font-family:Liberation Sans,sans-serif">Leaflet</span>
<span class="t" style="left:2246.50px;top:1341.43px;font-size:13.9px;line-height:13.9px;color:#333;letter-spacing:0.561px;">| © OpenStreetMap contributors, © CARTO</span>
</body></html>
